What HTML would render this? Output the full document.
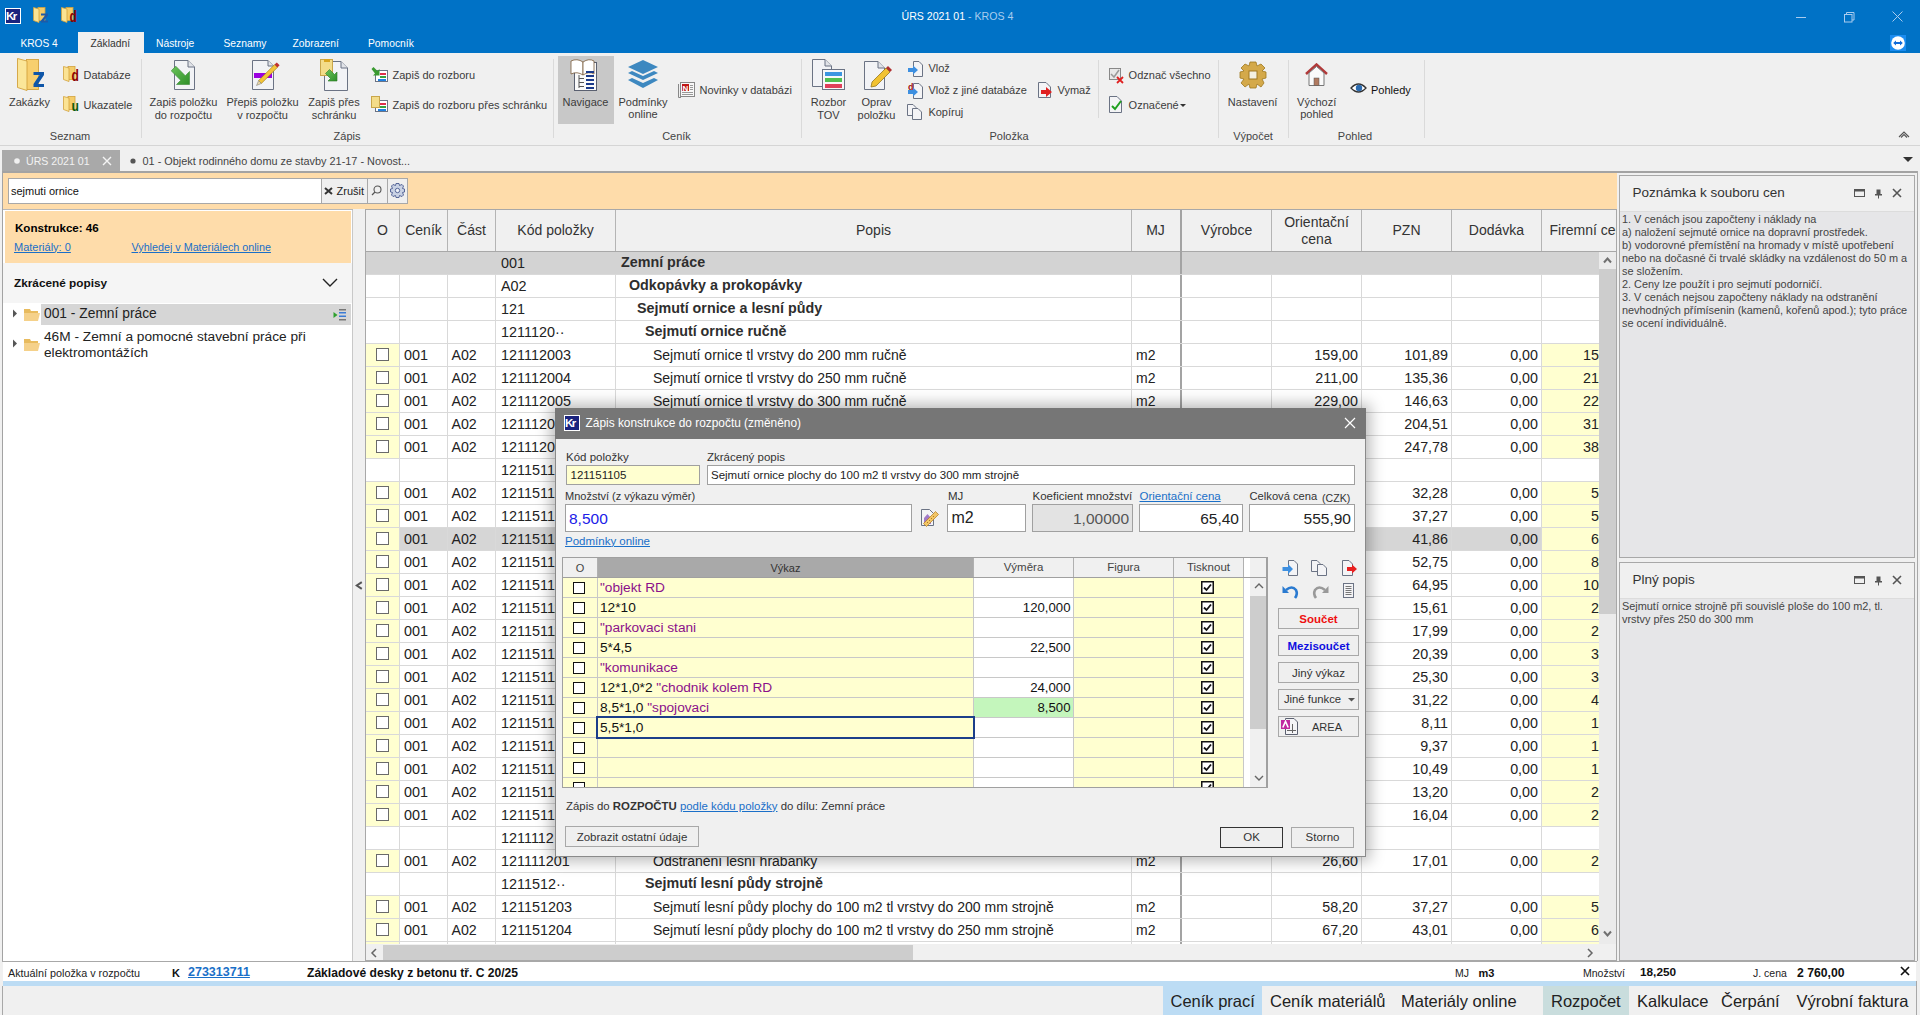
<!DOCTYPE html><html><head><meta charset="utf-8"><style>
html,body{margin:0;padding:0;}body{width:1920px;height:1015px;overflow:hidden;position:relative;background:#f0f0f0;font-family:"Liberation Sans",sans-serif;}
.t{position:absolute;white-space:nowrap;}.r{position:absolute;}
</style></head><body>
<div class="r" style="left:0px;top:0px;width:1920px;height:53px;background:#0072c6"></div>
<div class="r" style="left:5px;top:8px;width:16px;height:16px;background:#fff"></div>
<div class="r" style="left:6px;top:9px;width:14px;height:14px;background:#1a237e"></div>
<div class="t" style="left:6.00px;top:11.27px;font-size:11.5px;line-height:11.5px;color:#fff;font-weight:bold;letter-spacing:-1.5px">Kr</div>
<svg class="r" style="left:33px;top:7px;" width="18" height="17" viewBox="0 0 18 17"><rect x="5" y="0.5" width="7" height="13" fill="#f5cd6a" stroke="#d3a23c" stroke-width="0.8"/><path d="M0.5 0.5 L6 2 V15.5 L0.5 13.5 Z" fill="#fbe393" stroke="#d3a23c" stroke-width="0.8"/><path d="M8 6.5 H15 V8.5 L11 13.5 H15 V15.5 H8 V13.5 L12 8.5 H8 Z" fill="#1d5aa8"/></svg>
<svg class="r" style="left:61px;top:7px;" width="18" height="17" viewBox="0 0 18 17"><rect x="5" y="0.5" width="7" height="13" fill="#f5cd6a" stroke="#d3a23c" stroke-width="0.8"/><path d="M0.5 0.5 L6 2 V15.5 L0.5 13.5 Z" fill="#fbe393" stroke="#d3a23c" stroke-width="0.8"/><text x="8.6" y="15.3" font-family="Liberation Sans" font-weight="bold" font-size="16.5" fill="#8b0000" textLength="7.4" lengthAdjust="spacingAndGlyphs">d</text></svg>
<div class="t" style="left:901.50px;top:11.03px;font-size:10.6px;line-height:10.6px;color:#ffffff;font-weight:normal;">ÚRS 2021 01 <span style="color:#a9cdee">- KROS 4</span></div>
<div class="r" style="left:1796px;top:17px;width:10px;height:1px;background:#a9cbee"></div>
<svg class="r" style="left:1844px;top:12px;" width="11" height="11" viewBox="0 0 11 11"><rect x="0.5" y="2.5" width="7.5" height="7.5" fill="none" stroke="#a9cbee"/><path d="M2.5 2.5 V0.5 H10 V8 H8" fill="none" stroke="#a9cbee"/></svg>
<svg class="r" style="left:1892px;top:11px;" width="11" height="11" viewBox="0 0 11 11"><path d="M0.5 0.5 L10.5 10.5 M10.5 0.5 L0.5 10.5" stroke="#a9cbee" stroke-width="1"/></svg>
<div class="r" style="left:78px;top:32px;width:66px;height:21px;background:#f0f0f0"></div>
<div class="t" style="left:20.40px;top:39.17px;font-size:10.2px;line-height:10.2px;color:#ffffff;font-weight:normal;">KROS 4</div>
<div class="t" style="left:90.50px;top:39.28px;font-size:10.3px;line-height:10.3px;color:#333333;font-weight:normal;">Základní</div>
<div class="t" style="left:156.00px;top:39.28px;font-size:10.3px;line-height:10.3px;color:#ffffff;font-weight:normal;">Nástroje</div>
<div class="t" style="left:223.50px;top:39.28px;font-size:10.3px;line-height:10.3px;color:#ffffff;font-weight:normal;">Seznamy</div>
<div class="t" style="left:292.50px;top:39.28px;font-size:10.3px;line-height:10.3px;color:#ffffff;font-weight:normal;">Zobrazení</div>
<div class="t" style="left:368.00px;top:39.28px;font-size:10.3px;line-height:10.3px;color:#ffffff;font-weight:normal;">Pomocník</div>
<div class="r" style="left:1890px;top:35px;width:16px;height:16px;background:#1a8cf0"></div>
<svg class="r" style="left:1891px;top:36px;" width="14" height="14" viewBox="0 0 14 14"><circle cx="7" cy="7" r="6.8" fill="#fff"/><path d="M2.2 7 L5 4.6 V6 H9 V4.6 L11.8 7 L9 9.4 V8 H5 V9.4 Z" fill="#0e6ad8"/></svg>
<div class="r" style="left:0px;top:145px;width:1920px;height:1px;background:#d5d5d5"></div>
<div class="r" style="left:141px;top:59px;width:1px;height:79px;background:#dadada"></div>
<div class="r" style="left:553px;top:59px;width:1px;height:79px;background:#dadada"></div>
<div class="r" style="left:801px;top:59px;width:1px;height:79px;background:#dadada"></div>
<div class="r" style="left:1098px;top:60px;width:1px;height:58px;background:#dadada"></div>
<div class="r" style="left:1218px;top:60px;width:1px;height:78px;background:#dadada"></div>
<div class="r" style="left:1288px;top:60px;width:1px;height:78px;background:#dadada"></div>
<div class="r" style="left:1424px;top:60px;width:1px;height:78px;background:#dadada"></div>
<div class="t" style="left:-530.00px;width:1200px;text-align:center;top:130.99px;font-size:11px;line-height:11px;color:#444;font-weight:normal;">Seznam</div>
<div class="t" style="left:-253.00px;width:1200px;text-align:center;top:130.99px;font-size:11px;line-height:11px;color:#444;font-weight:normal;">Zápis</div>
<div class="t" style="left:76.50px;width:1200px;text-align:center;top:130.99px;font-size:11px;line-height:11px;color:#444;font-weight:normal;">Ceník</div>
<div class="t" style="left:409.00px;width:1200px;text-align:center;top:130.99px;font-size:11px;line-height:11px;color:#444;font-weight:normal;">Položka</div>
<div class="t" style="left:653.00px;width:1200px;text-align:center;top:130.99px;font-size:11px;line-height:11px;color:#444;font-weight:normal;">Výpočet</div>
<div class="t" style="left:755.00px;width:1200px;text-align:center;top:130.99px;font-size:11px;line-height:11px;color:#444;font-weight:normal;">Pohled</div>
<svg class="r" style="left:17px;top:58px;" width="30" height="34" viewBox="0 0 30 34"><rect x="9.5" y="1.5" width="12" height="30" fill="#f7cf6e" stroke="#d3a23c" stroke-width="0.9"/><path d="M0.5 0.5 L10 3 V32.5 L0.5 29.5 Z" fill="#fbe699" stroke="#d3a23c" stroke-width="0.9"/><path d="M16.5 14 H27 V17 L21 26 H27 V29 H16.5 V26 L22.5 17 H16.5 Z" fill="#0f56a8"/></svg>
<div class="t" style="left:-570.50px;width:1200px;text-align:center;top:97.49px;font-size:11px;line-height:11px;color:#3c3c3c;font-weight:normal;">Zakázky</div>
<svg class="r" style="left:63px;top:66px;" width="18" height="17" viewBox="0 0 18 17"><rect x="5" y="0.5" width="7" height="13" fill="#f5cd6a" stroke="#d3a23c" stroke-width="0.8"/><path d="M0.5 0.5 L6 2 V15.5 L0.5 13.5 Z" fill="#fbe393" stroke="#d3a23c" stroke-width="0.8"/><text x="8.6" y="15.3" font-family="Liberation Sans" font-weight="bold" font-size="16.5" fill="#8b0000" textLength="7.4" lengthAdjust="spacingAndGlyphs">d</text></svg>
<div class="t" style="left:83.50px;top:70.49px;font-size:11px;line-height:11px;color:#3c3c3c;font-weight:normal;">Databáze</div>
<svg class="r" style="left:63px;top:96px;" width="18" height="17" viewBox="0 0 18 17"><rect x="5" y="0.5" width="7" height="13" fill="#f5cd6a" stroke="#d3a23c" stroke-width="0.8"/><path d="M0.5 0.5 L6 2 V15.5 L0.5 13.5 Z" fill="#fbe393" stroke="#d3a23c" stroke-width="0.8"/><text x="8.6" y="15.3" font-family="Liberation Sans" font-weight="bold" font-size="15" fill="#0a5a0a" textLength="7.4" lengthAdjust="spacingAndGlyphs">u</text></svg>
<div class="t" style="left:83.50px;top:100.49px;font-size:11px;line-height:11px;color:#3c3c3c;font-weight:normal;">Ukazatele</div>
<svg class="r" style="left:171px;top:60px;" width="26" height="31" viewBox="0 0 26 31"><path d="M3.5 0.5 H17 L23.5 7 V29.5 H3.5 Z" fill="#f2f3f6" stroke="#6b7384"/><path d="M17 0.5 V7 H23.5" fill="#e1e3e8" stroke="#6b7384"/><defs><linearGradient id="ga" x1="0" y1="0" x2="1" y2="1"><stop offset="0" stop-color="#6cc45a"/><stop offset="1" stop-color="#2f8f2a"/></linearGradient></defs><path d="M4.8 6.2 L14.3 15.7 L18.5 11.5 L18.5 24.5 L5.5 24.5 L9.7 20.3 L0.2 10.8 Z" fill="url(#ga)" stroke="#3a8a35" stroke-width="0.6"/></svg>
<div class="t" style="left:-416.50px;width:1200px;text-align:center;top:97.49px;font-size:11px;line-height:11px;color:#3c3c3c;font-weight:normal;">Zapiš položku</div>
<div class="t" style="left:-416.50px;width:1200px;text-align:center;top:109.99px;font-size:11px;line-height:11px;color:#3c3c3c;font-weight:normal;">do rozpočtu</div>
<svg class="r" style="left:252px;top:60px;" width="30" height="31" viewBox="0 0 30 31"><path d="M0.5 0.5 H16 L21.5 6 V29.5 H0.5 Z" fill="#f2f3f6" stroke="#6b7384"/><path d="M16 0.5 V6 H21.5" fill="#e1e3e8" stroke="#6b7384"/><rect x="2" y="13" width="18" height="5" fill="#9b00e0"/><path d="M9.4 23.4 L25.4 7.4 L22.6 4.6 L6.6 20.6 Z" fill="#f3c53a" stroke="#9a7410" stroke-width="0.6"/><path d="M6.6 20.6 L9.4 23.4 L4.5 25.5 Z" fill="#e9d7a8" stroke="#777" stroke-width="0.5"/><path d="M25.4 7.4 L27.6 5.2 L24.8 2.4 L22.6 4.6 Z" fill="#c03030"/></svg>
<div class="t" style="left:-337.50px;width:1200px;text-align:center;top:97.49px;font-size:11px;line-height:11px;color:#3c3c3c;font-weight:normal;">Přepiš položku</div>
<div class="t" style="left:-337.50px;width:1200px;text-align:center;top:109.99px;font-size:11px;line-height:11px;color:#3c3c3c;font-weight:normal;">v rozpočtu</div>
<svg class="r" style="left:320px;top:59px;" width="28" height="32" viewBox="0 0 28 32"><path d="M4.5 2.5 H21 L27.5 9 V31.5 H4.5 Z" fill="#f2f3f6" stroke="#6b7384"/><path d="M21 2.5 V9 H27.5" fill="#e1e3e8" stroke="#6b7384"/><rect x="0.5" y="0.5" width="12" height="16" fill="#f3dc8a" stroke="#c9a64a"/><rect x="4" y="0" width="6" height="3" fill="#d9a520"/><path d="M7 13 L9.5 10.5 L14.5 15.5 L17 13 L17 22 L8 22 L10.5 19.5 L5.5 14.5 Z" fill="url(#ga)" stroke="#2a7a25" stroke-width="0.6"/></svg>
<div class="t" style="left:-266.00px;width:1200px;text-align:center;top:97.49px;font-size:11px;line-height:11px;color:#3c3c3c;font-weight:normal;">Zapiš přes</div>
<div class="t" style="left:-266.00px;width:1200px;text-align:center;top:109.99px;font-size:11px;line-height:11px;color:#3c3c3c;font-weight:normal;">schránku</div>
<svg class="r" style="left:371px;top:66px;" width="18" height="17" viewBox="0 0 18 17"><rect x="4.5" y="4.5" width="12" height="11" fill="#fff" stroke="#6b7384"/><rect x="9" y="7" width="6" height="2" fill="#e0304a"/><rect x="9" y="10" width="6" height="2" fill="#3aa040"/><rect x="7" y="13" width="8" height="2" fill="#2080e0"/><path d="M0.5 3 L2.5 1 L6.5 5 L8.5 3 L8.5 9.5 L2 9.5 L4 7.5 Z" fill="#3a9a30"/></svg>
<div class="t" style="left:392.50px;top:70.19px;font-size:11px;line-height:11px;color:#3c3c3c;font-weight:normal;">Zapiš do rozboru</div>
<svg class="r" style="left:371px;top:96px;" width="18" height="17" viewBox="0 0 18 17"><rect x="4.5" y="4.5" width="12" height="11" fill="#fff" stroke="#6b7384"/><rect x="9" y="7" width="6" height="2" fill="#e0304a"/><rect x="9" y="10" width="6" height="2" fill="#3aa040"/><rect x="7" y="13" width="8" height="2" fill="#2080e0"/><rect x="0.5" y="0.5" width="8" height="11" fill="#f3dc8a" stroke="#c9a64a"/></svg>
<div class="t" style="left:392.50px;top:100.09px;font-size:11px;line-height:11px;color:#3c3c3c;font-weight:normal;">Zapiš do rozboru přes schránku</div>
<div class="r" style="left:558px;top:56px;width:56px;height:68px;background:#c8c8c8"></div>
<svg class="r" style="left:570px;top:59px;" width="28" height="33" viewBox="0 0 28 33"><rect x="4.5" y="3.5" width="22" height="28" fill="#fafafa" stroke="#5a6070"/><path d="M1 2 Q7 -1 13 3 L13 16 Q7 12 1 15 Z" fill="#fff" stroke="#7a5a3a" stroke-width="0.8"/><path d="M13 3 Q19 -1 24 2 L24 15 Q19 12 13 16 Z" fill="#fff" stroke="#7a5a3a" stroke-width="0.8"/><g fill="#1a3a8a"><rect x="16" y="12" width="8" height="2"/><rect x="16" y="16" width="8" height="2"/><rect x="16" y="20" width="8" height="2"/><rect x="16" y="24" width="8" height="2"/><rect x="16" y="28" width="8" height="2"/></g><g stroke="#555" stroke-width="1" fill="none"><path d="M9 16 V29 M9 19.5 H14 M9 23.5 H14 M9 27.5 H14"/></g></svg>
<div class="t" style="left:-14.50px;width:1200px;text-align:center;top:96.99px;font-size:11px;line-height:11px;color:#3c3c3c;font-weight:normal;">Navigace</div>
<svg class="r" style="left:627px;top:59px;" width="32" height="31" viewBox="0 0 32 31"><g fill="#3d88c0"><path d="M16 1 L31 8 L16 15 L1 8 Z"/><path d="M1 14 L5 12 L16 17 L27 12 L31 14 L16 21 Z"/><path d="M1 21 L5 19 L16 24 L27 19 L31 21 L16 29 Z"/></g></svg>
<div class="t" style="left:43.00px;width:1200px;text-align:center;top:96.99px;font-size:11px;line-height:11px;color:#3c3c3c;font-weight:normal;">Podmínky</div>
<div class="t" style="left:43.00px;width:1200px;text-align:center;top:109.49px;font-size:11px;line-height:11px;color:#3c3c3c;font-weight:normal;">online</div>
<svg class="r" style="left:678px;top:81px;" width="18" height="17" viewBox="0 0 18 17"><rect x="2.5" y="1.5" width="14" height="14" fill="#f8f8f8" stroke="#888"/><rect x="4" y="3" width="7" height="7" fill="#c01818"/><text x="4.5" y="9.5" font-size="8" font-weight="bold" fill="#fff" font-family="Liberation Sans">N</text><g fill="#999"><rect x="12" y="4" width="3" height="1"/><rect x="12" y="6" width="3" height="1"/><rect x="12" y="8" width="3" height="1"/><rect x="4" y="11" width="11" height="1"/><rect x="4" y="13" width="11" height="1"/></g><path d="M0.5 3 V16.5 H3" fill="none" stroke="#888"/></svg>
<div class="t" style="left:699.50px;top:85.09px;font-size:11px;line-height:11px;color:#3c3c3c;font-weight:normal;">Novinky v databázi</div>
<svg class="r" style="left:811px;top:58px;" width="36" height="34" viewBox="0 0 36 34"><path d="M1.5 1.5 H14 L20.5 8 V28.5 H1.5 Z" fill="#f2f3f6" stroke="#6b7384"/><path d="M14 1.5 V8 H20.5" fill="#e1e3e8" stroke="#6b7384"/><rect x="11.5" y="11.5" width="22" height="20" fill="#f8f8f8" stroke="#6b7384"/><rect x="14" y="14" width="17" height="4" fill="#3c96e0"/><rect x="14" y="20" width="17" height="4" fill="#50c050"/><rect x="14" y="26" width="17" height="4" fill="#e0405a"/></svg>
<div class="t" style="left:228.50px;width:1200px;text-align:center;top:97.49px;font-size:11px;line-height:11px;color:#3c3c3c;font-weight:normal;">Rozbor</div>
<div class="t" style="left:228.50px;width:1200px;text-align:center;top:110.24px;font-size:11px;line-height:11px;color:#3c3c3c;font-weight:normal;">TOV</div>
<svg class="r" style="left:863px;top:60px;" width="30" height="32" viewBox="0 0 30 32"><path d="M1.5 1.5 H15 L21.5 8 V29.5 H1.5 Z" fill="#f2f3f6" stroke="#6b7384"/><path d="M15 1.5 V8 H21.5" fill="#e1e3e8" stroke="#6b7384"/><path d="M9 22 L23 8 L27 12 L13 26 L8 27 Z" fill="#f1c232" stroke="#8a6a10" stroke-width="0.7"/><path d="M23 8 L25 6 L29 10 L27 12 Z" fill="#b03030"/></svg>
<div class="t" style="left:276.50px;width:1200px;text-align:center;top:97.49px;font-size:11px;line-height:11px;color:#3c3c3c;font-weight:normal;">Oprav</div>
<div class="t" style="left:276.50px;width:1200px;text-align:center;top:110.24px;font-size:11px;line-height:11px;color:#3c3c3c;font-weight:normal;">položku</div>
<svg class="r" style="left:908px;top:61px;" width="17" height="17" viewBox="0 0 17 17"><path d="M5.5 0.5 H11 L14.5 4 V15.5 H5.5 Z" fill="#f4f4f6" stroke="#6b7384"/><path d="M0 7 H5 V4.5 L10 9 L5 13.5 V11 H0 Z" fill="#3d8fe0"/></svg>
<div class="t" style="left:928.40px;top:63.49px;font-size:11px;line-height:11px;color:#3c3c3c;font-weight:normal;">Vlož</div>
<svg class="r" style="left:908px;top:83px;" width="17" height="17" viewBox="0 0 17 17"><path d="M5.5 0.5 H11 L14.5 4 V15.5 H5.5 Z" fill="#f4f4f6" stroke="#6b7384"/><path d="M0 7 H5 V4.5 L10 9 L5 13.5 V11 H0 Z" fill="#3d8fe0"/><text x="0" y="7" font-size="9" font-weight="bold" fill="#a01010" font-family="Liberation Sans">d</text></svg>
<div class="t" style="left:928.40px;top:85.24px;font-size:11px;line-height:11px;color:#3c3c3c;font-weight:normal;">Vlož z jiné databáze</div>
<svg class="r" style="left:907px;top:104px;" width="17" height="17" viewBox="0 0 17 17"><path d="M0.5 0.5 H6 L9 3.5 V11.5 H0.5 Z" fill="#f4f4f6" stroke="#6b7384"/><path d="M5.5 4.5 H11 L14.5 8 V15.5 H5.5 Z" fill="#f4f4f6" stroke="#6b7384"/></svg>
<div class="t" style="left:928.40px;top:107.09px;font-size:11px;line-height:11px;color:#3c3c3c;font-weight:normal;">Kopíruj</div>
<svg class="r" style="left:1038px;top:82px;" width="17" height="17" viewBox="0 0 17 17"><path d="M0.5 0.5 H8 L12.5 5 V15.5 H0.5 Z" fill="#f4f4f6" stroke="#6b7384"/><path d="M3 8 H8 V5 L14 10 L8 15 V12 H3 Z" fill="#e02020"/></svg>
<div class="t" style="left:1057.50px;top:85.24px;font-size:11px;line-height:11px;color:#3c3c3c;font-weight:normal;">Vymaž</div>
<svg class="r" style="left:1109px;top:67px;" width="18" height="18" viewBox="0 0 18 18"><rect x="0.5" y="1.5" width="11" height="11" fill="#e8e8e8" stroke="#888"/><path d="M2 7 L5 10 L10 3" stroke="#999" stroke-width="1.5" fill="none"/><path d="M8 10 L14 16 M14 10 L8 16" stroke="#e02020" stroke-width="1.8"/></svg>
<div class="t" style="left:1128.60px;top:69.79px;font-size:11px;line-height:11px;color:#3c3c3c;font-weight:normal;">Odznač všechno</div>
<svg class="r" style="left:1109px;top:96px;" width="18" height="18" viewBox="0 0 18 18"><path d="M0.5 0.5 H8 L12.5 5 V16.5 H0.5 Z" fill="#f4f4f6" stroke="#6b7384"/><path d="M3 10 L6 13 L12 5" stroke="#20a020" stroke-width="2" fill="none"/></svg>
<div class="t" style="left:1128.60px;top:99.89px;font-size:11px;line-height:11px;color:#3c3c3c;font-weight:normal;">Označené</div>
<svg class="r" style="left:1180px;top:104px;" width="6" height="4" viewBox="0 0 6 4"><path d="M0 0 H6 L3 3 Z" fill="#333"/></svg>
<svg class="r" style="left:1239px;top:61px;" width="28" height="28" viewBox="0 0 28 28"><g transform="translate(14,14)"><path d="M-3 -13 H3 L4 -9 L8 -11 L12 -7 L9 -4 L13 -3 V3 L9 4 L11 8 L8 12 L4 9 L3 13 H-3 L-4 9 L-8 12 L-12 8 L-9 4 L-13 3 V-3 L-9 -4 L-12 -7 L-8 -11 L-4 -9 Z" fill="#d4a94a" stroke="#a07820" stroke-width="0.8"/><rect x="-4" y="-4" width="8" height="8" fill="#f4f0e0" stroke="#a07820"/></g></svg>
<div class="t" style="left:652.60px;width:1200px;text-align:center;top:97.29px;font-size:11px;line-height:11px;color:#3c3c3c;font-weight:normal;">Nastavení</div>
<svg class="r" style="left:1304px;top:63px;" width="25" height="25" viewBox="0 0 25 25"><path d="M2 11 L12.5 1.5 L23 11" fill="none" stroke="#b03a3a" stroke-width="2.5"/><path d="M5 10 V22.5 H20 V10 L12.5 3.5 Z" fill="#fafafa" stroke="#777"/><rect x="10" y="15" width="5" height="7.5" fill="#b07a60" stroke="#555" stroke-width="0.5"/></svg>
<div class="t" style="left:716.70px;width:1200px;text-align:center;top:96.99px;font-size:11px;line-height:11px;color:#3c3c3c;font-weight:normal;">Výchozí</div>
<div class="t" style="left:716.70px;width:1200px;text-align:center;top:109.49px;font-size:11px;line-height:11px;color:#3c3c3c;font-weight:normal;">pohled</div>
<svg class="r" style="left:1350px;top:82px;" width="17" height="12" viewBox="0 0 17 12"><path d="M1 6 Q8.5 -2 16 6 Q8.5 14 1 6 Z" fill="#fff" stroke="#333" stroke-width="1.3"/><circle cx="9" cy="6" r="3.2" fill="#2a6ab0"/></svg>
<div class="t" style="left:1371.00px;top:84.89px;font-size:11px;line-height:11px;color:#111;font-weight:normal;">Pohledy</div>
<svg class="r" style="left:1898px;top:129px;" width="12" height="9" viewBox="0 0 12 9"><path d="M1 8 L6 3 L11 8 M3 8.5 L6 5.5 L9 8.5" fill="none" stroke="#555" stroke-width="1.1"/></svg>
<div class="r" style="left:2px;top:150px;width:118px;height:22px;background:#a9a9a9"></div>
<svg class="r" style="left:13px;top:157px;" width="8" height="8" viewBox="0 0 8 8"><circle cx="4" cy="4" r="2.8" fill="#f0f0f0"/></svg>
<div class="t" style="left:26.00px;top:156.23px;font-size:10.6px;line-height:10.6px;color:#f2f2f2;font-weight:normal;">ÚRS 2021 01</div>
<svg class="r" style="left:102px;top:156px;" width="10" height="10" viewBox="0 0 10 10"><path d="M1 1 L9 9 M9 1 L1 9" stroke="#f4f4f4" stroke-width="1.4"/></svg>
<svg class="r" style="left:129px;top:157px;" width="8" height="8" viewBox="0 0 8 8"><circle cx="4" cy="4" r="2.6" fill="#555"/></svg>
<div class="t" style="left:142.50px;top:155.97px;font-size:10.9px;line-height:10.9px;color:#444;font-weight:normal;">01 - Objekt rodinného domu ze stavby 21-17 - Novost...</div>
<svg class="r" style="left:1903px;top:157px;" width="10" height="6" viewBox="0 0 10 6"><path d="M0 0 H10 L5 5 Z" fill="#333"/></svg>
<div class="r" style="left:2px;top:171px;width:1915px;height:2px;background:#a3a3a3"></div>
<div class="r" style="left:2px;top:171px;width:1px;height:790px;background:#a3a3a3"></div>
<div class="r" style="left:3px;top:173px;width:1614px;height:36px;background:#fedcaa"></div>
<div class="r" style="left:8px;top:178px;width:314px;height:26px;background:#fff;border:1px solid #a8a8a8;box-sizing:border-box"></div>
<div class="t" style="left:11.00px;top:185.69px;font-size:11px;line-height:11px;color:#111;font-weight:normal;">sejmuti ornice</div>
<div class="r" style="left:322px;top:178px;width:46px;height:26px;background:#efefef;border:1px solid #a8a8a8;border-left:none;box-sizing:border-box"></div>
<div class="r" style="left:368px;top:178px;width:20px;height:26px;background:#efefef;border:1px solid #a8a8a8;border-left:none;box-sizing:border-box"></div>
<div class="r" style="left:388px;top:178px;width:20px;height:26px;background:#efefef;border:1px solid #a8a8a8;border-left:none;box-sizing:border-box"></div>
<svg class="r" style="left:324px;top:187px;" width="9" height="8" viewBox="0 0 9 8"><path d="M1 1 L8 7 M8 1 L1 7" stroke="#333" stroke-width="2"/></svg>
<div class="t" style="left:336.50px;top:185.69px;font-size:11px;line-height:11px;color:#222;font-weight:normal;">Zrušit</div>
<svg class="r" style="left:371px;top:185px;" width="11" height="11" viewBox="0 0 11 11"><circle cx="6.5" cy="4.5" r="3.5" fill="none" stroke="#555" stroke-width="1.1"/><path d="M4 7 L1 10" stroke="#555" stroke-width="1.3"/></svg>
<svg class="r" style="left:390px;top:183px;" width="15" height="15" viewBox="0 0 15 15"><g transform="translate(7.5,7.5)"><path d="M-1.5 -7 H1.5 L2 -5 L4.5 -6 L6 -4.5 L5 -2 L7 -1.5 V1.5 L5 2 L6 4.5 L4.5 6 L2 5 L1.5 7 H-1.5 L-2 5 L-4.5 6 L-6 4.5 L-5 2 L-7 1.5 V-1.5 L-5 -2 L-6 -4.5 L-4.5 -6 L-2 -5 Z" fill="#c9d2e4" stroke="#4a5a90" stroke-width="0.9"/><circle r="2.2" fill="#eef2f8" stroke="#4a5a90" stroke-width="0.9"/></g></svg>
<div class="r" style="left:3px;top:209px;width:350px;height:752px;background:#fff"></div>
<div class="r" style="left:352px;top:209px;width:1px;height:752px;background:#c8c8c8"></div>
<div class="r" style="left:3px;top:209px;width:350px;height:1px;background:#b8b8b8"></div>
<div class="r" style="left:5px;top:211px;width:346px;height:52px;background:#fedcaa"></div>
<div class="t" style="left:15.00px;top:222.18px;font-size:11.6px;line-height:11.6px;color:#000;font-weight:bold;">Konstrukce: 46</div>
<div class="t" style="left:14.00px;top:241.69px;font-size:11px;line-height:11px;color:#1a6fc8;font-weight:normal;text-decoration:underline">Materiály: 0</div>
<div class="t" style="left:131.50px;top:241.90px;font-size:10.75px;line-height:10.75px;color:#1a6fc8;font-weight:normal;text-decoration:underline">Vyhledej v Materiálech online</div>
<div class="r" style="left:3px;top:263px;width:349px;height:40px;background:#f5f5f5"></div>
<div class="t" style="left:14.00px;top:278.01px;font-size:11.8px;line-height:11.8px;color:#111;font-weight:bold;">Zkrácené popisy</div>
<svg class="r" style="left:322px;top:278px;" width="16" height="10" viewBox="0 0 16 10"><path d="M1 1 L8 8 L15 1" fill="none" stroke="#222" stroke-width="1.4"/></svg>
<div class="r" style="left:41px;top:304px;width:310px;height:21px;background:#d6d6d6"></div>
<svg class="r" style="left:12px;top:309px;" width="6" height="9" viewBox="0 0 6 9"><path d="M1 0.5 L5 4.5 L1 8.5 Z" fill="#555"/></svg>
<svg class="r" style="left:23px;top:307px;" width="18" height="15" viewBox="0 0 18 15"><path d="M1 2 H7 L8 4 H15 V13 H1 Z" fill="#e8bb5e"/><path d="M1 6 H17 L15 14 H1 Z" fill="#f5d18a"/></svg>
<div class="t" style="left:44.00px;top:307.32px;font-size:13.8px;line-height:13.8px;color:#222;font-weight:normal;">001 - Zemní práce</div>
<svg class="r" style="left:333px;top:308px;" width="14" height="13" viewBox="0 0 14 13"><path d="M0.5 4 L4.5 7 L0.5 10 Z" fill="#2ea02e"/><g fill="#777"><rect x="6" y="1" width="7" height="1.5"/><rect x="6" y="11" width="7" height="1.5"/></g><g fill="#3a7bd5"><rect x="6" y="4" width="7" height="1.5"/><rect x="6" y="7.5" width="7" height="1.5"/></g></svg>
<svg class="r" style="left:12px;top:339px;" width="6" height="9" viewBox="0 0 6 9"><path d="M1 0.5 L5 4.5 L1 8.5 Z" fill="#555"/></svg>
<svg class="r" style="left:23px;top:337px;" width="18" height="15" viewBox="0 0 18 15"><path d="M1 2 H7 L8 4 H15 V13 H1 Z" fill="#e8bb5e"/><path d="M1 6 H17 L15 14 H1 Z" fill="#f5d18a"/></svg>
<div class="t" style="left:44.00px;top:329.60px;font-size:13.7px;line-height:13.7px;color:#222;font-weight:normal;">46M - Zemní a pomocné stavební práce při</div>
<div class="t" style="left:44.00px;top:345.90px;font-size:13.7px;line-height:13.7px;color:#222;font-weight:normal;">elektromontážích</div>
<div class="r" style="left:353px;top:209px;width:12px;height:752px;background:#f0f0f0"></div>
<svg class="r" style="left:355px;top:581px;" width="8" height="9" viewBox="0 0 8 9"><path d="M6.8 1.2 L1.8 4.5 L6.8 7.8" fill="none" stroke="#555" stroke-width="2"/></svg>
<div class="r" style="left:365px;top:209px;width:1252px;height:752px;background:#fff"></div>
<div class="r" style="left:365px;top:209px;width:1252px;height:43px;background:#f0f0f0"></div>
<div class="r" style="left:365px;top:209px;width:1252px;height:1px;background:#a8a8a8"></div>
<div class="r" style="left:365px;top:209px;width:1px;height:752px;background:#a8a8a8"></div>
<div class="r" style="left:1616px;top:209px;width:1px;height:752px;background:#a8a8a8"></div>
<div class="r" style="left:365px;top:251px;width:1252px;height:1px;background:#a8a8a8"></div>
<div class="r" style="left:399px;top:210px;width:1px;height:41px;background:#b4b4b4"></div>
<div class="r" style="left:447px;top:210px;width:1px;height:41px;background:#b4b4b4"></div>
<div class="r" style="left:495px;top:210px;width:1px;height:41px;background:#b4b4b4"></div>
<div class="r" style="left:615px;top:210px;width:1px;height:41px;background:#b4b4b4"></div>
<div class="r" style="left:1131px;top:210px;width:1px;height:41px;background:#b4b4b4"></div>
<div class="r" style="left:1271px;top:210px;width:1px;height:41px;background:#b4b4b4"></div>
<div class="r" style="left:1361px;top:210px;width:1px;height:41px;background:#b4b4b4"></div>
<div class="r" style="left:1451px;top:210px;width:1px;height:41px;background:#b4b4b4"></div>
<div class="r" style="left:1541px;top:210px;width:1px;height:41px;background:#b4b4b4"></div>
<div class="r" style="left:1180px;top:210px;width:2px;height:751px;background:#a3a3a3"></div>
<div class="t" style="left:-217.50px;width:1200px;text-align:center;top:222.55px;font-size:14px;line-height:14px;color:#333;font-weight:normal;">O</div>
<div class="t" style="left:-176.50px;width:1200px;text-align:center;top:222.55px;font-size:14px;line-height:14px;color:#333;font-weight:normal;">Ceník</div>
<div class="t" style="left:-128.50px;width:1200px;text-align:center;top:222.55px;font-size:14px;line-height:14px;color:#333;font-weight:normal;">Část</div>
<div class="t" style="left:-44.50px;width:1200px;text-align:center;top:222.55px;font-size:14px;line-height:14px;color:#333;font-weight:normal;">Kód položky</div>
<div class="t" style="left:273.50px;width:1200px;text-align:center;top:222.55px;font-size:14px;line-height:14px;color:#333;font-weight:normal;">Popis</div>
<div class="t" style="left:555.50px;width:1200px;text-align:center;top:222.55px;font-size:14px;line-height:14px;color:#333;font-weight:normal;">MJ</div>
<div class="t" style="left:626.50px;width:1200px;text-align:center;top:222.55px;font-size:14px;line-height:14px;color:#333;font-weight:normal;">Výrobce</div>
<div class="t" style="left:806.50px;width:1200px;text-align:center;top:222.55px;font-size:14px;line-height:14px;color:#333;font-weight:normal;">PZN</div>
<div class="t" style="left:896.50px;width:1200px;text-align:center;top:222.55px;font-size:14px;line-height:14px;color:#333;font-weight:normal;">Dodávka</div>
<div class="t" style="left:716.50px;width:1200px;text-align:center;top:214.55px;font-size:14px;line-height:14px;color:#333;font-weight:normal;">Orientační</div>
<div class="t" style="left:716.50px;width:1200px;text-align:center;top:231.75px;font-size:14px;line-height:14px;color:#333;font-weight:normal;">cena</div>
<div class="r" style="left:1542px;top:210px;width:74px;height:40px;overflow:hidden">
<div class="t" style="left:7.50px;top:12.55px;font-size:14px;line-height:14px;color:#333;font-weight:normal;">Firemní cena</div>
</div>
<div class="r" style="left:366px;top:252px;width:1233px;height:22px;background:#d3d3d3"></div>
<div class="r" style="left:1180px;top:252px;width:2px;height:23px;background:#a3a3a3"></div>
<div class="r" style="left:366px;top:274px;width:1233px;height:1px;background:#d9d9d9"></div>
<div class="t" style="left:501.00px;top:255.51px;font-size:14.4px;line-height:14.4px;color:#222;font-weight:normal;">001</div>
<div class="t" style="left:621.00px;top:254.60px;font-size:14.3px;line-height:14.3px;color:#2e2e2e;font-weight:bold;">Zemní práce</div>
<div class="r" style="left:399px;top:275px;width:1px;height:23px;background:#d9d9d9"></div>
<div class="r" style="left:447px;top:275px;width:1px;height:23px;background:#d9d9d9"></div>
<div class="r" style="left:495px;top:275px;width:1px;height:23px;background:#d9d9d9"></div>
<div class="r" style="left:615px;top:275px;width:1px;height:23px;background:#d9d9d9"></div>
<div class="r" style="left:1131px;top:275px;width:1px;height:23px;background:#d9d9d9"></div>
<div class="r" style="left:1271px;top:275px;width:1px;height:23px;background:#d9d9d9"></div>
<div class="r" style="left:1361px;top:275px;width:1px;height:23px;background:#d9d9d9"></div>
<div class="r" style="left:1451px;top:275px;width:1px;height:23px;background:#d9d9d9"></div>
<div class="r" style="left:1541px;top:275px;width:1px;height:23px;background:#d9d9d9"></div>
<div class="r" style="left:366px;top:297px;width:1233px;height:1px;background:#d9d9d9"></div>
<div class="t" style="left:501.00px;top:278.51px;font-size:14.4px;line-height:14.4px;color:#222;font-weight:normal;">A02</div>
<div class="t" style="left:629.00px;top:277.60px;font-size:14.3px;line-height:14.3px;color:#2e2e2e;font-weight:bold;">Odkopávky a prokopávky</div>
<div class="r" style="left:399px;top:298px;width:1px;height:23px;background:#d9d9d9"></div>
<div class="r" style="left:447px;top:298px;width:1px;height:23px;background:#d9d9d9"></div>
<div class="r" style="left:495px;top:298px;width:1px;height:23px;background:#d9d9d9"></div>
<div class="r" style="left:615px;top:298px;width:1px;height:23px;background:#d9d9d9"></div>
<div class="r" style="left:1131px;top:298px;width:1px;height:23px;background:#d9d9d9"></div>
<div class="r" style="left:1271px;top:298px;width:1px;height:23px;background:#d9d9d9"></div>
<div class="r" style="left:1361px;top:298px;width:1px;height:23px;background:#d9d9d9"></div>
<div class="r" style="left:1451px;top:298px;width:1px;height:23px;background:#d9d9d9"></div>
<div class="r" style="left:1541px;top:298px;width:1px;height:23px;background:#d9d9d9"></div>
<div class="r" style="left:366px;top:320px;width:1233px;height:1px;background:#d9d9d9"></div>
<div class="t" style="left:501.00px;top:301.51px;font-size:14.4px;line-height:14.4px;color:#222;font-weight:normal;">121</div>
<div class="t" style="left:637.00px;top:300.60px;font-size:14.3px;line-height:14.3px;color:#2e2e2e;font-weight:bold;">Sejmutí ornice a lesní půdy</div>
<div class="r" style="left:399px;top:321px;width:1px;height:23px;background:#d9d9d9"></div>
<div class="r" style="left:447px;top:321px;width:1px;height:23px;background:#d9d9d9"></div>
<div class="r" style="left:495px;top:321px;width:1px;height:23px;background:#d9d9d9"></div>
<div class="r" style="left:615px;top:321px;width:1px;height:23px;background:#d9d9d9"></div>
<div class="r" style="left:1131px;top:321px;width:1px;height:23px;background:#d9d9d9"></div>
<div class="r" style="left:1271px;top:321px;width:1px;height:23px;background:#d9d9d9"></div>
<div class="r" style="left:1361px;top:321px;width:1px;height:23px;background:#d9d9d9"></div>
<div class="r" style="left:1451px;top:321px;width:1px;height:23px;background:#d9d9d9"></div>
<div class="r" style="left:1541px;top:321px;width:1px;height:23px;background:#d9d9d9"></div>
<div class="r" style="left:366px;top:343px;width:1233px;height:1px;background:#d9d9d9"></div>
<div class="t" style="left:501.00px;top:324.51px;font-size:14.4px;line-height:14.4px;color:#222;font-weight:normal;">1211120··</div>
<div class="t" style="left:645.00px;top:323.60px;font-size:14.3px;line-height:14.3px;color:#2e2e2e;font-weight:bold;">Sejmutí ornice ručně</div>
<div class="r" style="left:366px;top:344px;width:33px;height:23px;background:#ffffd0"></div>
<div class="r" style="left:1542px;top:344px;width:57px;height:23px;background:#ffffd0"></div>
<div class="r" style="left:399px;top:344px;width:1px;height:23px;background:#d9d9d9"></div>
<div class="r" style="left:447px;top:344px;width:1px;height:23px;background:#d9d9d9"></div>
<div class="r" style="left:495px;top:344px;width:1px;height:23px;background:#d9d9d9"></div>
<div class="r" style="left:615px;top:344px;width:1px;height:23px;background:#d9d9d9"></div>
<div class="r" style="left:1131px;top:344px;width:1px;height:23px;background:#d9d9d9"></div>
<div class="r" style="left:1271px;top:344px;width:1px;height:23px;background:#d9d9d9"></div>
<div class="r" style="left:1361px;top:344px;width:1px;height:23px;background:#d9d9d9"></div>
<div class="r" style="left:1451px;top:344px;width:1px;height:23px;background:#d9d9d9"></div>
<div class="r" style="left:1541px;top:344px;width:1px;height:23px;background:#d9d9d9"></div>
<div class="r" style="left:366px;top:366px;width:1233px;height:1px;background:#d9d9d9"></div>
<div class="r" style="left:376px;top:348px;width:13px;height:13px;background:#fff;border:1px solid #6a6a6a;box-sizing:border-box"></div>
<div class="t" style="left:404.00px;top:347.51px;font-size:14.4px;line-height:14.4px;color:#222;font-weight:normal;">001</div>
<div class="t" style="left:451.50px;top:347.68px;font-size:14.2px;line-height:14.2px;color:#222;font-weight:normal;">A02</div>
<div class="t" style="left:501.00px;top:347.51px;font-size:14.4px;line-height:14.4px;color:#222;font-weight:normal;">121112003</div>
<div class="t" style="left:653.00px;top:347.85px;font-size:14px;line-height:14px;color:#222;font-weight:normal;">Sejmutí ornice tl vrstvy do 200 mm ručně</div>
<div class="t" style="left:1136.00px;top:347.85px;font-size:14px;line-height:14px;color:#222;font-weight:normal;">m2</div>
<div class="t" style="left:158.00px;width:1200px;text-align:right;top:347.60px;font-size:14.3px;line-height:14.3px;color:#222;font-weight:normal;">159,00</div>
<div class="t" style="left:248.00px;width:1200px;text-align:right;top:347.60px;font-size:14.3px;line-height:14.3px;color:#222;font-weight:normal;">101,89</div>
<div class="t" style="left:338.00px;width:1200px;text-align:right;top:347.60px;font-size:14.3px;line-height:14.3px;color:#222;font-weight:normal;">0,00</div>
<div class="t" style="left:399.00px;width:1200px;text-align:right;top:347.60px;font-size:14.3px;line-height:14.3px;color:#222;font-weight:normal;">15</div>
<div class="r" style="left:366px;top:367px;width:33px;height:23px;background:#ffffd0"></div>
<div class="r" style="left:1542px;top:367px;width:57px;height:23px;background:#ffffd0"></div>
<div class="r" style="left:399px;top:367px;width:1px;height:23px;background:#d9d9d9"></div>
<div class="r" style="left:447px;top:367px;width:1px;height:23px;background:#d9d9d9"></div>
<div class="r" style="left:495px;top:367px;width:1px;height:23px;background:#d9d9d9"></div>
<div class="r" style="left:615px;top:367px;width:1px;height:23px;background:#d9d9d9"></div>
<div class="r" style="left:1131px;top:367px;width:1px;height:23px;background:#d9d9d9"></div>
<div class="r" style="left:1271px;top:367px;width:1px;height:23px;background:#d9d9d9"></div>
<div class="r" style="left:1361px;top:367px;width:1px;height:23px;background:#d9d9d9"></div>
<div class="r" style="left:1451px;top:367px;width:1px;height:23px;background:#d9d9d9"></div>
<div class="r" style="left:1541px;top:367px;width:1px;height:23px;background:#d9d9d9"></div>
<div class="r" style="left:366px;top:389px;width:1233px;height:1px;background:#d9d9d9"></div>
<div class="r" style="left:376px;top:371px;width:13px;height:13px;background:#fff;border:1px solid #6a6a6a;box-sizing:border-box"></div>
<div class="t" style="left:404.00px;top:370.51px;font-size:14.4px;line-height:14.4px;color:#222;font-weight:normal;">001</div>
<div class="t" style="left:451.50px;top:370.68px;font-size:14.2px;line-height:14.2px;color:#222;font-weight:normal;">A02</div>
<div class="t" style="left:501.00px;top:370.51px;font-size:14.4px;line-height:14.4px;color:#222;font-weight:normal;">121112004</div>
<div class="t" style="left:653.00px;top:370.85px;font-size:14px;line-height:14px;color:#222;font-weight:normal;">Sejmutí ornice tl vrstvy do 250 mm ručně</div>
<div class="t" style="left:1136.00px;top:370.85px;font-size:14px;line-height:14px;color:#222;font-weight:normal;">m2</div>
<div class="t" style="left:158.00px;width:1200px;text-align:right;top:370.60px;font-size:14.3px;line-height:14.3px;color:#222;font-weight:normal;">211,00</div>
<div class="t" style="left:248.00px;width:1200px;text-align:right;top:370.60px;font-size:14.3px;line-height:14.3px;color:#222;font-weight:normal;">135,36</div>
<div class="t" style="left:338.00px;width:1200px;text-align:right;top:370.60px;font-size:14.3px;line-height:14.3px;color:#222;font-weight:normal;">0,00</div>
<div class="t" style="left:399.00px;width:1200px;text-align:right;top:370.60px;font-size:14.3px;line-height:14.3px;color:#222;font-weight:normal;">21</div>
<div class="r" style="left:366px;top:390px;width:33px;height:23px;background:#ffffd0"></div>
<div class="r" style="left:1542px;top:390px;width:57px;height:23px;background:#ffffd0"></div>
<div class="r" style="left:399px;top:390px;width:1px;height:23px;background:#d9d9d9"></div>
<div class="r" style="left:447px;top:390px;width:1px;height:23px;background:#d9d9d9"></div>
<div class="r" style="left:495px;top:390px;width:1px;height:23px;background:#d9d9d9"></div>
<div class="r" style="left:615px;top:390px;width:1px;height:23px;background:#d9d9d9"></div>
<div class="r" style="left:1131px;top:390px;width:1px;height:23px;background:#d9d9d9"></div>
<div class="r" style="left:1271px;top:390px;width:1px;height:23px;background:#d9d9d9"></div>
<div class="r" style="left:1361px;top:390px;width:1px;height:23px;background:#d9d9d9"></div>
<div class="r" style="left:1451px;top:390px;width:1px;height:23px;background:#d9d9d9"></div>
<div class="r" style="left:1541px;top:390px;width:1px;height:23px;background:#d9d9d9"></div>
<div class="r" style="left:366px;top:412px;width:1233px;height:1px;background:#d9d9d9"></div>
<div class="r" style="left:376px;top:394px;width:13px;height:13px;background:#fff;border:1px solid #6a6a6a;box-sizing:border-box"></div>
<div class="t" style="left:404.00px;top:393.51px;font-size:14.4px;line-height:14.4px;color:#222;font-weight:normal;">001</div>
<div class="t" style="left:451.50px;top:393.68px;font-size:14.2px;line-height:14.2px;color:#222;font-weight:normal;">A02</div>
<div class="t" style="left:501.00px;top:393.51px;font-size:14.4px;line-height:14.4px;color:#222;font-weight:normal;">121112005</div>
<div class="t" style="left:653.00px;top:393.85px;font-size:14px;line-height:14px;color:#222;font-weight:normal;">Sejmutí ornice tl vrstvy do 300 mm ručně</div>
<div class="t" style="left:1136.00px;top:393.85px;font-size:14px;line-height:14px;color:#222;font-weight:normal;">m2</div>
<div class="t" style="left:158.00px;width:1200px;text-align:right;top:393.60px;font-size:14.3px;line-height:14.3px;color:#222;font-weight:normal;">229,00</div>
<div class="t" style="left:248.00px;width:1200px;text-align:right;top:393.60px;font-size:14.3px;line-height:14.3px;color:#222;font-weight:normal;">146,63</div>
<div class="t" style="left:338.00px;width:1200px;text-align:right;top:393.60px;font-size:14.3px;line-height:14.3px;color:#222;font-weight:normal;">0,00</div>
<div class="t" style="left:399.00px;width:1200px;text-align:right;top:393.60px;font-size:14.3px;line-height:14.3px;color:#222;font-weight:normal;">22</div>
<div class="r" style="left:366px;top:413px;width:33px;height:23px;background:#ffffd0"></div>
<div class="r" style="left:1542px;top:413px;width:57px;height:23px;background:#ffffd0"></div>
<div class="r" style="left:399px;top:413px;width:1px;height:23px;background:#d9d9d9"></div>
<div class="r" style="left:447px;top:413px;width:1px;height:23px;background:#d9d9d9"></div>
<div class="r" style="left:495px;top:413px;width:1px;height:23px;background:#d9d9d9"></div>
<div class="r" style="left:615px;top:413px;width:1px;height:23px;background:#d9d9d9"></div>
<div class="r" style="left:1131px;top:413px;width:1px;height:23px;background:#d9d9d9"></div>
<div class="r" style="left:1271px;top:413px;width:1px;height:23px;background:#d9d9d9"></div>
<div class="r" style="left:1361px;top:413px;width:1px;height:23px;background:#d9d9d9"></div>
<div class="r" style="left:1451px;top:413px;width:1px;height:23px;background:#d9d9d9"></div>
<div class="r" style="left:1541px;top:413px;width:1px;height:23px;background:#d9d9d9"></div>
<div class="r" style="left:366px;top:435px;width:1233px;height:1px;background:#d9d9d9"></div>
<div class="r" style="left:376px;top:417px;width:13px;height:13px;background:#fff;border:1px solid #6a6a6a;box-sizing:border-box"></div>
<div class="t" style="left:404.00px;top:416.51px;font-size:14.4px;line-height:14.4px;color:#222;font-weight:normal;">001</div>
<div class="t" style="left:451.50px;top:416.68px;font-size:14.2px;line-height:14.2px;color:#222;font-weight:normal;">A02</div>
<div class="t" style="left:501.00px;top:416.51px;font-size:14.4px;line-height:14.4px;color:#222;font-weight:normal;">121112006</div>
<div class="t" style="left:1136.00px;top:416.85px;font-size:14px;line-height:14px;color:#222;font-weight:normal;">m2</div>
<div class="t" style="left:248.00px;width:1200px;text-align:right;top:416.60px;font-size:14.3px;line-height:14.3px;color:#222;font-weight:normal;">204,51</div>
<div class="t" style="left:338.00px;width:1200px;text-align:right;top:416.60px;font-size:14.3px;line-height:14.3px;color:#222;font-weight:normal;">0,00</div>
<div class="t" style="left:399.00px;width:1200px;text-align:right;top:416.60px;font-size:14.3px;line-height:14.3px;color:#222;font-weight:normal;">31</div>
<div class="r" style="left:366px;top:436px;width:33px;height:23px;background:#ffffd0"></div>
<div class="r" style="left:1542px;top:436px;width:57px;height:23px;background:#ffffd0"></div>
<div class="r" style="left:399px;top:436px;width:1px;height:23px;background:#d9d9d9"></div>
<div class="r" style="left:447px;top:436px;width:1px;height:23px;background:#d9d9d9"></div>
<div class="r" style="left:495px;top:436px;width:1px;height:23px;background:#d9d9d9"></div>
<div class="r" style="left:615px;top:436px;width:1px;height:23px;background:#d9d9d9"></div>
<div class="r" style="left:1131px;top:436px;width:1px;height:23px;background:#d9d9d9"></div>
<div class="r" style="left:1271px;top:436px;width:1px;height:23px;background:#d9d9d9"></div>
<div class="r" style="left:1361px;top:436px;width:1px;height:23px;background:#d9d9d9"></div>
<div class="r" style="left:1451px;top:436px;width:1px;height:23px;background:#d9d9d9"></div>
<div class="r" style="left:1541px;top:436px;width:1px;height:23px;background:#d9d9d9"></div>
<div class="r" style="left:366px;top:458px;width:1233px;height:1px;background:#d9d9d9"></div>
<div class="r" style="left:376px;top:440px;width:13px;height:13px;background:#fff;border:1px solid #6a6a6a;box-sizing:border-box"></div>
<div class="t" style="left:404.00px;top:439.51px;font-size:14.4px;line-height:14.4px;color:#222;font-weight:normal;">001</div>
<div class="t" style="left:451.50px;top:439.68px;font-size:14.2px;line-height:14.2px;color:#222;font-weight:normal;">A02</div>
<div class="t" style="left:501.00px;top:439.51px;font-size:14.4px;line-height:14.4px;color:#222;font-weight:normal;">121112007</div>
<div class="t" style="left:1136.00px;top:439.85px;font-size:14px;line-height:14px;color:#222;font-weight:normal;">m2</div>
<div class="t" style="left:248.00px;width:1200px;text-align:right;top:439.60px;font-size:14.3px;line-height:14.3px;color:#222;font-weight:normal;">247,78</div>
<div class="t" style="left:338.00px;width:1200px;text-align:right;top:439.60px;font-size:14.3px;line-height:14.3px;color:#222;font-weight:normal;">0,00</div>
<div class="t" style="left:399.00px;width:1200px;text-align:right;top:439.60px;font-size:14.3px;line-height:14.3px;color:#222;font-weight:normal;">38</div>
<div class="r" style="left:399px;top:459px;width:1px;height:23px;background:#d9d9d9"></div>
<div class="r" style="left:447px;top:459px;width:1px;height:23px;background:#d9d9d9"></div>
<div class="r" style="left:495px;top:459px;width:1px;height:23px;background:#d9d9d9"></div>
<div class="r" style="left:615px;top:459px;width:1px;height:23px;background:#d9d9d9"></div>
<div class="r" style="left:1131px;top:459px;width:1px;height:23px;background:#d9d9d9"></div>
<div class="r" style="left:1271px;top:459px;width:1px;height:23px;background:#d9d9d9"></div>
<div class="r" style="left:1361px;top:459px;width:1px;height:23px;background:#d9d9d9"></div>
<div class="r" style="left:1451px;top:459px;width:1px;height:23px;background:#d9d9d9"></div>
<div class="r" style="left:1541px;top:459px;width:1px;height:23px;background:#d9d9d9"></div>
<div class="r" style="left:366px;top:481px;width:1233px;height:1px;background:#d9d9d9"></div>
<div class="t" style="left:501.00px;top:462.51px;font-size:14.4px;line-height:14.4px;color:#222;font-weight:normal;">1211511··</div>
<div class="r" style="left:366px;top:482px;width:33px;height:23px;background:#ffffd0"></div>
<div class="r" style="left:1542px;top:482px;width:57px;height:23px;background:#ffffd0"></div>
<div class="r" style="left:399px;top:482px;width:1px;height:23px;background:#d9d9d9"></div>
<div class="r" style="left:447px;top:482px;width:1px;height:23px;background:#d9d9d9"></div>
<div class="r" style="left:495px;top:482px;width:1px;height:23px;background:#d9d9d9"></div>
<div class="r" style="left:615px;top:482px;width:1px;height:23px;background:#d9d9d9"></div>
<div class="r" style="left:1131px;top:482px;width:1px;height:23px;background:#d9d9d9"></div>
<div class="r" style="left:1271px;top:482px;width:1px;height:23px;background:#d9d9d9"></div>
<div class="r" style="left:1361px;top:482px;width:1px;height:23px;background:#d9d9d9"></div>
<div class="r" style="left:1451px;top:482px;width:1px;height:23px;background:#d9d9d9"></div>
<div class="r" style="left:1541px;top:482px;width:1px;height:23px;background:#d9d9d9"></div>
<div class="r" style="left:366px;top:504px;width:1233px;height:1px;background:#d9d9d9"></div>
<div class="r" style="left:376px;top:486px;width:13px;height:13px;background:#fff;border:1px solid #6a6a6a;box-sizing:border-box"></div>
<div class="t" style="left:404.00px;top:485.51px;font-size:14.4px;line-height:14.4px;color:#222;font-weight:normal;">001</div>
<div class="t" style="left:451.50px;top:485.68px;font-size:14.2px;line-height:14.2px;color:#222;font-weight:normal;">A02</div>
<div class="t" style="left:501.00px;top:485.51px;font-size:14.4px;line-height:14.4px;color:#222;font-weight:normal;">121151103</div>
<div class="t" style="left:1136.00px;top:485.85px;font-size:14px;line-height:14px;color:#222;font-weight:normal;">m2</div>
<div class="t" style="left:248.00px;width:1200px;text-align:right;top:485.60px;font-size:14.3px;line-height:14.3px;color:#222;font-weight:normal;">32,28</div>
<div class="t" style="left:338.00px;width:1200px;text-align:right;top:485.60px;font-size:14.3px;line-height:14.3px;color:#222;font-weight:normal;">0,00</div>
<div class="t" style="left:399.00px;width:1200px;text-align:right;top:485.60px;font-size:14.3px;line-height:14.3px;color:#222;font-weight:normal;">5</div>
<div class="r" style="left:366px;top:505px;width:33px;height:23px;background:#ffffd0"></div>
<div class="r" style="left:1542px;top:505px;width:57px;height:23px;background:#ffffd0"></div>
<div class="r" style="left:399px;top:505px;width:1px;height:23px;background:#d9d9d9"></div>
<div class="r" style="left:447px;top:505px;width:1px;height:23px;background:#d9d9d9"></div>
<div class="r" style="left:495px;top:505px;width:1px;height:23px;background:#d9d9d9"></div>
<div class="r" style="left:615px;top:505px;width:1px;height:23px;background:#d9d9d9"></div>
<div class="r" style="left:1131px;top:505px;width:1px;height:23px;background:#d9d9d9"></div>
<div class="r" style="left:1271px;top:505px;width:1px;height:23px;background:#d9d9d9"></div>
<div class="r" style="left:1361px;top:505px;width:1px;height:23px;background:#d9d9d9"></div>
<div class="r" style="left:1451px;top:505px;width:1px;height:23px;background:#d9d9d9"></div>
<div class="r" style="left:1541px;top:505px;width:1px;height:23px;background:#d9d9d9"></div>
<div class="r" style="left:366px;top:527px;width:1233px;height:1px;background:#d9d9d9"></div>
<div class="r" style="left:376px;top:509px;width:13px;height:13px;background:#fff;border:1px solid #6a6a6a;box-sizing:border-box"></div>
<div class="t" style="left:404.00px;top:508.51px;font-size:14.4px;line-height:14.4px;color:#222;font-weight:normal;">001</div>
<div class="t" style="left:451.50px;top:508.68px;font-size:14.2px;line-height:14.2px;color:#222;font-weight:normal;">A02</div>
<div class="t" style="left:501.00px;top:508.51px;font-size:14.4px;line-height:14.4px;color:#222;font-weight:normal;">121151104</div>
<div class="t" style="left:1136.00px;top:508.85px;font-size:14px;line-height:14px;color:#222;font-weight:normal;">m2</div>
<div class="t" style="left:248.00px;width:1200px;text-align:right;top:508.60px;font-size:14.3px;line-height:14.3px;color:#222;font-weight:normal;">37,27</div>
<div class="t" style="left:338.00px;width:1200px;text-align:right;top:508.60px;font-size:14.3px;line-height:14.3px;color:#222;font-weight:normal;">0,00</div>
<div class="t" style="left:399.00px;width:1200px;text-align:right;top:508.60px;font-size:14.3px;line-height:14.3px;color:#222;font-weight:normal;">5</div>
<div class="r" style="left:366px;top:528px;width:33px;height:23px;background:#ffffd0"></div>
<div class="r" style="left:1542px;top:528px;width:57px;height:23px;background:#ffffd0"></div>
<div class="r" style="left:400px;top:528px;width:1141px;height:23px;background:#d6d6d6"></div>
<div class="r" style="left:399px;top:528px;width:1px;height:23px;background:#d9d9d9"></div>
<div class="r" style="left:447px;top:528px;width:1px;height:23px;background:#d9d9d9"></div>
<div class="r" style="left:495px;top:528px;width:1px;height:23px;background:#d9d9d9"></div>
<div class="r" style="left:615px;top:528px;width:1px;height:23px;background:#d9d9d9"></div>
<div class="r" style="left:1131px;top:528px;width:1px;height:23px;background:#d9d9d9"></div>
<div class="r" style="left:1271px;top:528px;width:1px;height:23px;background:#d9d9d9"></div>
<div class="r" style="left:1361px;top:528px;width:1px;height:23px;background:#d9d9d9"></div>
<div class="r" style="left:1451px;top:528px;width:1px;height:23px;background:#d9d9d9"></div>
<div class="r" style="left:1541px;top:528px;width:1px;height:23px;background:#d9d9d9"></div>
<div class="r" style="left:366px;top:550px;width:1233px;height:1px;background:#d9d9d9"></div>
<div class="r" style="left:376px;top:532px;width:13px;height:13px;background:#fff;border:1px solid #6a6a6a;box-sizing:border-box"></div>
<div class="t" style="left:404.00px;top:531.51px;font-size:14.4px;line-height:14.4px;color:#222;font-weight:normal;">001</div>
<div class="t" style="left:451.50px;top:531.68px;font-size:14.2px;line-height:14.2px;color:#222;font-weight:normal;">A02</div>
<div class="t" style="left:501.00px;top:531.51px;font-size:14.4px;line-height:14.4px;color:#222;font-weight:normal;">121151105</div>
<div class="t" style="left:1136.00px;top:531.85px;font-size:14px;line-height:14px;color:#222;font-weight:normal;">m2</div>
<div class="t" style="left:248.00px;width:1200px;text-align:right;top:531.60px;font-size:14.3px;line-height:14.3px;color:#222;font-weight:normal;">41,86</div>
<div class="t" style="left:338.00px;width:1200px;text-align:right;top:531.60px;font-size:14.3px;line-height:14.3px;color:#222;font-weight:normal;">0,00</div>
<div class="t" style="left:399.00px;width:1200px;text-align:right;top:531.60px;font-size:14.3px;line-height:14.3px;color:#222;font-weight:normal;">6</div>
<div class="r" style="left:366px;top:551px;width:33px;height:23px;background:#ffffd0"></div>
<div class="r" style="left:1542px;top:551px;width:57px;height:23px;background:#ffffd0"></div>
<div class="r" style="left:399px;top:551px;width:1px;height:23px;background:#d9d9d9"></div>
<div class="r" style="left:447px;top:551px;width:1px;height:23px;background:#d9d9d9"></div>
<div class="r" style="left:495px;top:551px;width:1px;height:23px;background:#d9d9d9"></div>
<div class="r" style="left:615px;top:551px;width:1px;height:23px;background:#d9d9d9"></div>
<div class="r" style="left:1131px;top:551px;width:1px;height:23px;background:#d9d9d9"></div>
<div class="r" style="left:1271px;top:551px;width:1px;height:23px;background:#d9d9d9"></div>
<div class="r" style="left:1361px;top:551px;width:1px;height:23px;background:#d9d9d9"></div>
<div class="r" style="left:1451px;top:551px;width:1px;height:23px;background:#d9d9d9"></div>
<div class="r" style="left:1541px;top:551px;width:1px;height:23px;background:#d9d9d9"></div>
<div class="r" style="left:366px;top:573px;width:1233px;height:1px;background:#d9d9d9"></div>
<div class="r" style="left:376px;top:555px;width:13px;height:13px;background:#fff;border:1px solid #6a6a6a;box-sizing:border-box"></div>
<div class="t" style="left:404.00px;top:554.51px;font-size:14.4px;line-height:14.4px;color:#222;font-weight:normal;">001</div>
<div class="t" style="left:451.50px;top:554.68px;font-size:14.2px;line-height:14.2px;color:#222;font-weight:normal;">A02</div>
<div class="t" style="left:501.00px;top:554.51px;font-size:14.4px;line-height:14.4px;color:#222;font-weight:normal;">121151106</div>
<div class="t" style="left:1136.00px;top:554.85px;font-size:14px;line-height:14px;color:#222;font-weight:normal;">m2</div>
<div class="t" style="left:248.00px;width:1200px;text-align:right;top:554.60px;font-size:14.3px;line-height:14.3px;color:#222;font-weight:normal;">52,75</div>
<div class="t" style="left:338.00px;width:1200px;text-align:right;top:554.60px;font-size:14.3px;line-height:14.3px;color:#222;font-weight:normal;">0,00</div>
<div class="t" style="left:399.00px;width:1200px;text-align:right;top:554.60px;font-size:14.3px;line-height:14.3px;color:#222;font-weight:normal;">8</div>
<div class="r" style="left:366px;top:574px;width:33px;height:23px;background:#ffffd0"></div>
<div class="r" style="left:1542px;top:574px;width:57px;height:23px;background:#ffffd0"></div>
<div class="r" style="left:399px;top:574px;width:1px;height:23px;background:#d9d9d9"></div>
<div class="r" style="left:447px;top:574px;width:1px;height:23px;background:#d9d9d9"></div>
<div class="r" style="left:495px;top:574px;width:1px;height:23px;background:#d9d9d9"></div>
<div class="r" style="left:615px;top:574px;width:1px;height:23px;background:#d9d9d9"></div>
<div class="r" style="left:1131px;top:574px;width:1px;height:23px;background:#d9d9d9"></div>
<div class="r" style="left:1271px;top:574px;width:1px;height:23px;background:#d9d9d9"></div>
<div class="r" style="left:1361px;top:574px;width:1px;height:23px;background:#d9d9d9"></div>
<div class="r" style="left:1451px;top:574px;width:1px;height:23px;background:#d9d9d9"></div>
<div class="r" style="left:1541px;top:574px;width:1px;height:23px;background:#d9d9d9"></div>
<div class="r" style="left:366px;top:596px;width:1233px;height:1px;background:#d9d9d9"></div>
<div class="r" style="left:376px;top:578px;width:13px;height:13px;background:#fff;border:1px solid #6a6a6a;box-sizing:border-box"></div>
<div class="t" style="left:404.00px;top:577.51px;font-size:14.4px;line-height:14.4px;color:#222;font-weight:normal;">001</div>
<div class="t" style="left:451.50px;top:577.68px;font-size:14.2px;line-height:14.2px;color:#222;font-weight:normal;">A02</div>
<div class="t" style="left:501.00px;top:577.51px;font-size:14.4px;line-height:14.4px;color:#222;font-weight:normal;">121151107</div>
<div class="t" style="left:1136.00px;top:577.85px;font-size:14px;line-height:14px;color:#222;font-weight:normal;">m2</div>
<div class="t" style="left:248.00px;width:1200px;text-align:right;top:577.60px;font-size:14.3px;line-height:14.3px;color:#222;font-weight:normal;">64,95</div>
<div class="t" style="left:338.00px;width:1200px;text-align:right;top:577.60px;font-size:14.3px;line-height:14.3px;color:#222;font-weight:normal;">0,00</div>
<div class="t" style="left:399.00px;width:1200px;text-align:right;top:577.60px;font-size:14.3px;line-height:14.3px;color:#222;font-weight:normal;">10</div>
<div class="r" style="left:366px;top:597px;width:33px;height:23px;background:#ffffd0"></div>
<div class="r" style="left:1542px;top:597px;width:57px;height:23px;background:#ffffd0"></div>
<div class="r" style="left:399px;top:597px;width:1px;height:23px;background:#d9d9d9"></div>
<div class="r" style="left:447px;top:597px;width:1px;height:23px;background:#d9d9d9"></div>
<div class="r" style="left:495px;top:597px;width:1px;height:23px;background:#d9d9d9"></div>
<div class="r" style="left:615px;top:597px;width:1px;height:23px;background:#d9d9d9"></div>
<div class="r" style="left:1131px;top:597px;width:1px;height:23px;background:#d9d9d9"></div>
<div class="r" style="left:1271px;top:597px;width:1px;height:23px;background:#d9d9d9"></div>
<div class="r" style="left:1361px;top:597px;width:1px;height:23px;background:#d9d9d9"></div>
<div class="r" style="left:1451px;top:597px;width:1px;height:23px;background:#d9d9d9"></div>
<div class="r" style="left:1541px;top:597px;width:1px;height:23px;background:#d9d9d9"></div>
<div class="r" style="left:366px;top:619px;width:1233px;height:1px;background:#d9d9d9"></div>
<div class="r" style="left:376px;top:601px;width:13px;height:13px;background:#fff;border:1px solid #6a6a6a;box-sizing:border-box"></div>
<div class="t" style="left:404.00px;top:600.51px;font-size:14.4px;line-height:14.4px;color:#222;font-weight:normal;">001</div>
<div class="t" style="left:451.50px;top:600.68px;font-size:14.2px;line-height:14.2px;color:#222;font-weight:normal;">A02</div>
<div class="t" style="left:501.00px;top:600.51px;font-size:14.4px;line-height:14.4px;color:#222;font-weight:normal;">121151113</div>
<div class="t" style="left:1136.00px;top:600.85px;font-size:14px;line-height:14px;color:#222;font-weight:normal;">m2</div>
<div class="t" style="left:248.00px;width:1200px;text-align:right;top:600.60px;font-size:14.3px;line-height:14.3px;color:#222;font-weight:normal;">15,61</div>
<div class="t" style="left:338.00px;width:1200px;text-align:right;top:600.60px;font-size:14.3px;line-height:14.3px;color:#222;font-weight:normal;">0,00</div>
<div class="t" style="left:399.00px;width:1200px;text-align:right;top:600.60px;font-size:14.3px;line-height:14.3px;color:#222;font-weight:normal;">2</div>
<div class="r" style="left:366px;top:620px;width:33px;height:23px;background:#ffffd0"></div>
<div class="r" style="left:1542px;top:620px;width:57px;height:23px;background:#ffffd0"></div>
<div class="r" style="left:399px;top:620px;width:1px;height:23px;background:#d9d9d9"></div>
<div class="r" style="left:447px;top:620px;width:1px;height:23px;background:#d9d9d9"></div>
<div class="r" style="left:495px;top:620px;width:1px;height:23px;background:#d9d9d9"></div>
<div class="r" style="left:615px;top:620px;width:1px;height:23px;background:#d9d9d9"></div>
<div class="r" style="left:1131px;top:620px;width:1px;height:23px;background:#d9d9d9"></div>
<div class="r" style="left:1271px;top:620px;width:1px;height:23px;background:#d9d9d9"></div>
<div class="r" style="left:1361px;top:620px;width:1px;height:23px;background:#d9d9d9"></div>
<div class="r" style="left:1451px;top:620px;width:1px;height:23px;background:#d9d9d9"></div>
<div class="r" style="left:1541px;top:620px;width:1px;height:23px;background:#d9d9d9"></div>
<div class="r" style="left:366px;top:642px;width:1233px;height:1px;background:#d9d9d9"></div>
<div class="r" style="left:376px;top:624px;width:13px;height:13px;background:#fff;border:1px solid #6a6a6a;box-sizing:border-box"></div>
<div class="t" style="left:404.00px;top:623.51px;font-size:14.4px;line-height:14.4px;color:#222;font-weight:normal;">001</div>
<div class="t" style="left:451.50px;top:623.68px;font-size:14.2px;line-height:14.2px;color:#222;font-weight:normal;">A02</div>
<div class="t" style="left:501.00px;top:623.51px;font-size:14.4px;line-height:14.4px;color:#222;font-weight:normal;">121151114</div>
<div class="t" style="left:1136.00px;top:623.85px;font-size:14px;line-height:14px;color:#222;font-weight:normal;">m2</div>
<div class="t" style="left:248.00px;width:1200px;text-align:right;top:623.60px;font-size:14.3px;line-height:14.3px;color:#222;font-weight:normal;">17,99</div>
<div class="t" style="left:338.00px;width:1200px;text-align:right;top:623.60px;font-size:14.3px;line-height:14.3px;color:#222;font-weight:normal;">0,00</div>
<div class="t" style="left:399.00px;width:1200px;text-align:right;top:623.60px;font-size:14.3px;line-height:14.3px;color:#222;font-weight:normal;">2</div>
<div class="r" style="left:366px;top:643px;width:33px;height:23px;background:#ffffd0"></div>
<div class="r" style="left:1542px;top:643px;width:57px;height:23px;background:#ffffd0"></div>
<div class="r" style="left:399px;top:643px;width:1px;height:23px;background:#d9d9d9"></div>
<div class="r" style="left:447px;top:643px;width:1px;height:23px;background:#d9d9d9"></div>
<div class="r" style="left:495px;top:643px;width:1px;height:23px;background:#d9d9d9"></div>
<div class="r" style="left:615px;top:643px;width:1px;height:23px;background:#d9d9d9"></div>
<div class="r" style="left:1131px;top:643px;width:1px;height:23px;background:#d9d9d9"></div>
<div class="r" style="left:1271px;top:643px;width:1px;height:23px;background:#d9d9d9"></div>
<div class="r" style="left:1361px;top:643px;width:1px;height:23px;background:#d9d9d9"></div>
<div class="r" style="left:1451px;top:643px;width:1px;height:23px;background:#d9d9d9"></div>
<div class="r" style="left:1541px;top:643px;width:1px;height:23px;background:#d9d9d9"></div>
<div class="r" style="left:366px;top:665px;width:1233px;height:1px;background:#d9d9d9"></div>
<div class="r" style="left:376px;top:647px;width:13px;height:13px;background:#fff;border:1px solid #6a6a6a;box-sizing:border-box"></div>
<div class="t" style="left:404.00px;top:646.51px;font-size:14.4px;line-height:14.4px;color:#222;font-weight:normal;">001</div>
<div class="t" style="left:451.50px;top:646.68px;font-size:14.2px;line-height:14.2px;color:#222;font-weight:normal;">A02</div>
<div class="t" style="left:501.00px;top:646.51px;font-size:14.4px;line-height:14.4px;color:#222;font-weight:normal;">121151115</div>
<div class="t" style="left:1136.00px;top:646.85px;font-size:14px;line-height:14px;color:#222;font-weight:normal;">m2</div>
<div class="t" style="left:248.00px;width:1200px;text-align:right;top:646.60px;font-size:14.3px;line-height:14.3px;color:#222;font-weight:normal;">20,39</div>
<div class="t" style="left:338.00px;width:1200px;text-align:right;top:646.60px;font-size:14.3px;line-height:14.3px;color:#222;font-weight:normal;">0,00</div>
<div class="t" style="left:399.00px;width:1200px;text-align:right;top:646.60px;font-size:14.3px;line-height:14.3px;color:#222;font-weight:normal;">3</div>
<div class="r" style="left:366px;top:666px;width:33px;height:23px;background:#ffffd0"></div>
<div class="r" style="left:1542px;top:666px;width:57px;height:23px;background:#ffffd0"></div>
<div class="r" style="left:399px;top:666px;width:1px;height:23px;background:#d9d9d9"></div>
<div class="r" style="left:447px;top:666px;width:1px;height:23px;background:#d9d9d9"></div>
<div class="r" style="left:495px;top:666px;width:1px;height:23px;background:#d9d9d9"></div>
<div class="r" style="left:615px;top:666px;width:1px;height:23px;background:#d9d9d9"></div>
<div class="r" style="left:1131px;top:666px;width:1px;height:23px;background:#d9d9d9"></div>
<div class="r" style="left:1271px;top:666px;width:1px;height:23px;background:#d9d9d9"></div>
<div class="r" style="left:1361px;top:666px;width:1px;height:23px;background:#d9d9d9"></div>
<div class="r" style="left:1451px;top:666px;width:1px;height:23px;background:#d9d9d9"></div>
<div class="r" style="left:1541px;top:666px;width:1px;height:23px;background:#d9d9d9"></div>
<div class="r" style="left:366px;top:688px;width:1233px;height:1px;background:#d9d9d9"></div>
<div class="r" style="left:376px;top:670px;width:13px;height:13px;background:#fff;border:1px solid #6a6a6a;box-sizing:border-box"></div>
<div class="t" style="left:404.00px;top:669.51px;font-size:14.4px;line-height:14.4px;color:#222;font-weight:normal;">001</div>
<div class="t" style="left:451.50px;top:669.68px;font-size:14.2px;line-height:14.2px;color:#222;font-weight:normal;">A02</div>
<div class="t" style="left:501.00px;top:669.51px;font-size:14.4px;line-height:14.4px;color:#222;font-weight:normal;">121151116</div>
<div class="t" style="left:1136.00px;top:669.85px;font-size:14px;line-height:14px;color:#222;font-weight:normal;">m2</div>
<div class="t" style="left:248.00px;width:1200px;text-align:right;top:669.60px;font-size:14.3px;line-height:14.3px;color:#222;font-weight:normal;">25,30</div>
<div class="t" style="left:338.00px;width:1200px;text-align:right;top:669.60px;font-size:14.3px;line-height:14.3px;color:#222;font-weight:normal;">0,00</div>
<div class="t" style="left:399.00px;width:1200px;text-align:right;top:669.60px;font-size:14.3px;line-height:14.3px;color:#222;font-weight:normal;">3</div>
<div class="r" style="left:366px;top:689px;width:33px;height:23px;background:#ffffd0"></div>
<div class="r" style="left:1542px;top:689px;width:57px;height:23px;background:#ffffd0"></div>
<div class="r" style="left:399px;top:689px;width:1px;height:23px;background:#d9d9d9"></div>
<div class="r" style="left:447px;top:689px;width:1px;height:23px;background:#d9d9d9"></div>
<div class="r" style="left:495px;top:689px;width:1px;height:23px;background:#d9d9d9"></div>
<div class="r" style="left:615px;top:689px;width:1px;height:23px;background:#d9d9d9"></div>
<div class="r" style="left:1131px;top:689px;width:1px;height:23px;background:#d9d9d9"></div>
<div class="r" style="left:1271px;top:689px;width:1px;height:23px;background:#d9d9d9"></div>
<div class="r" style="left:1361px;top:689px;width:1px;height:23px;background:#d9d9d9"></div>
<div class="r" style="left:1451px;top:689px;width:1px;height:23px;background:#d9d9d9"></div>
<div class="r" style="left:1541px;top:689px;width:1px;height:23px;background:#d9d9d9"></div>
<div class="r" style="left:366px;top:711px;width:1233px;height:1px;background:#d9d9d9"></div>
<div class="r" style="left:376px;top:693px;width:13px;height:13px;background:#fff;border:1px solid #6a6a6a;box-sizing:border-box"></div>
<div class="t" style="left:404.00px;top:692.51px;font-size:14.4px;line-height:14.4px;color:#222;font-weight:normal;">001</div>
<div class="t" style="left:451.50px;top:692.68px;font-size:14.2px;line-height:14.2px;color:#222;font-weight:normal;">A02</div>
<div class="t" style="left:501.00px;top:692.51px;font-size:14.4px;line-height:14.4px;color:#222;font-weight:normal;">121151117</div>
<div class="t" style="left:1136.00px;top:692.85px;font-size:14px;line-height:14px;color:#222;font-weight:normal;">m2</div>
<div class="t" style="left:248.00px;width:1200px;text-align:right;top:692.60px;font-size:14.3px;line-height:14.3px;color:#222;font-weight:normal;">31,22</div>
<div class="t" style="left:338.00px;width:1200px;text-align:right;top:692.60px;font-size:14.3px;line-height:14.3px;color:#222;font-weight:normal;">0,00</div>
<div class="t" style="left:399.00px;width:1200px;text-align:right;top:692.60px;font-size:14.3px;line-height:14.3px;color:#222;font-weight:normal;">4</div>
<div class="r" style="left:366px;top:712px;width:33px;height:23px;background:#ffffd0"></div>
<div class="r" style="left:1542px;top:712px;width:57px;height:23px;background:#ffffd0"></div>
<div class="r" style="left:399px;top:712px;width:1px;height:23px;background:#d9d9d9"></div>
<div class="r" style="left:447px;top:712px;width:1px;height:23px;background:#d9d9d9"></div>
<div class="r" style="left:495px;top:712px;width:1px;height:23px;background:#d9d9d9"></div>
<div class="r" style="left:615px;top:712px;width:1px;height:23px;background:#d9d9d9"></div>
<div class="r" style="left:1131px;top:712px;width:1px;height:23px;background:#d9d9d9"></div>
<div class="r" style="left:1271px;top:712px;width:1px;height:23px;background:#d9d9d9"></div>
<div class="r" style="left:1361px;top:712px;width:1px;height:23px;background:#d9d9d9"></div>
<div class="r" style="left:1451px;top:712px;width:1px;height:23px;background:#d9d9d9"></div>
<div class="r" style="left:1541px;top:712px;width:1px;height:23px;background:#d9d9d9"></div>
<div class="r" style="left:366px;top:734px;width:1233px;height:1px;background:#d9d9d9"></div>
<div class="r" style="left:376px;top:716px;width:13px;height:13px;background:#fff;border:1px solid #6a6a6a;box-sizing:border-box"></div>
<div class="t" style="left:404.00px;top:715.51px;font-size:14.4px;line-height:14.4px;color:#222;font-weight:normal;">001</div>
<div class="t" style="left:451.50px;top:715.68px;font-size:14.2px;line-height:14.2px;color:#222;font-weight:normal;">A02</div>
<div class="t" style="left:501.00px;top:715.51px;font-size:14.4px;line-height:14.4px;color:#222;font-weight:normal;">121151123</div>
<div class="t" style="left:1136.00px;top:715.85px;font-size:14px;line-height:14px;color:#222;font-weight:normal;">m2</div>
<div class="t" style="left:248.00px;width:1200px;text-align:right;top:715.60px;font-size:14.3px;line-height:14.3px;color:#222;font-weight:normal;">8,11</div>
<div class="t" style="left:338.00px;width:1200px;text-align:right;top:715.60px;font-size:14.3px;line-height:14.3px;color:#222;font-weight:normal;">0,00</div>
<div class="t" style="left:399.00px;width:1200px;text-align:right;top:715.60px;font-size:14.3px;line-height:14.3px;color:#222;font-weight:normal;">1</div>
<div class="r" style="left:366px;top:735px;width:33px;height:23px;background:#ffffd0"></div>
<div class="r" style="left:1542px;top:735px;width:57px;height:23px;background:#ffffd0"></div>
<div class="r" style="left:399px;top:735px;width:1px;height:23px;background:#d9d9d9"></div>
<div class="r" style="left:447px;top:735px;width:1px;height:23px;background:#d9d9d9"></div>
<div class="r" style="left:495px;top:735px;width:1px;height:23px;background:#d9d9d9"></div>
<div class="r" style="left:615px;top:735px;width:1px;height:23px;background:#d9d9d9"></div>
<div class="r" style="left:1131px;top:735px;width:1px;height:23px;background:#d9d9d9"></div>
<div class="r" style="left:1271px;top:735px;width:1px;height:23px;background:#d9d9d9"></div>
<div class="r" style="left:1361px;top:735px;width:1px;height:23px;background:#d9d9d9"></div>
<div class="r" style="left:1451px;top:735px;width:1px;height:23px;background:#d9d9d9"></div>
<div class="r" style="left:1541px;top:735px;width:1px;height:23px;background:#d9d9d9"></div>
<div class="r" style="left:366px;top:757px;width:1233px;height:1px;background:#d9d9d9"></div>
<div class="r" style="left:376px;top:739px;width:13px;height:13px;background:#fff;border:1px solid #6a6a6a;box-sizing:border-box"></div>
<div class="t" style="left:404.00px;top:738.51px;font-size:14.4px;line-height:14.4px;color:#222;font-weight:normal;">001</div>
<div class="t" style="left:451.50px;top:738.68px;font-size:14.2px;line-height:14.2px;color:#222;font-weight:normal;">A02</div>
<div class="t" style="left:501.00px;top:738.51px;font-size:14.4px;line-height:14.4px;color:#222;font-weight:normal;">121151124</div>
<div class="t" style="left:1136.00px;top:738.85px;font-size:14px;line-height:14px;color:#222;font-weight:normal;">m2</div>
<div class="t" style="left:248.00px;width:1200px;text-align:right;top:738.60px;font-size:14.3px;line-height:14.3px;color:#222;font-weight:normal;">9,37</div>
<div class="t" style="left:338.00px;width:1200px;text-align:right;top:738.60px;font-size:14.3px;line-height:14.3px;color:#222;font-weight:normal;">0,00</div>
<div class="t" style="left:399.00px;width:1200px;text-align:right;top:738.60px;font-size:14.3px;line-height:14.3px;color:#222;font-weight:normal;">1</div>
<div class="r" style="left:366px;top:758px;width:33px;height:23px;background:#ffffd0"></div>
<div class="r" style="left:1542px;top:758px;width:57px;height:23px;background:#ffffd0"></div>
<div class="r" style="left:399px;top:758px;width:1px;height:23px;background:#d9d9d9"></div>
<div class="r" style="left:447px;top:758px;width:1px;height:23px;background:#d9d9d9"></div>
<div class="r" style="left:495px;top:758px;width:1px;height:23px;background:#d9d9d9"></div>
<div class="r" style="left:615px;top:758px;width:1px;height:23px;background:#d9d9d9"></div>
<div class="r" style="left:1131px;top:758px;width:1px;height:23px;background:#d9d9d9"></div>
<div class="r" style="left:1271px;top:758px;width:1px;height:23px;background:#d9d9d9"></div>
<div class="r" style="left:1361px;top:758px;width:1px;height:23px;background:#d9d9d9"></div>
<div class="r" style="left:1451px;top:758px;width:1px;height:23px;background:#d9d9d9"></div>
<div class="r" style="left:1541px;top:758px;width:1px;height:23px;background:#d9d9d9"></div>
<div class="r" style="left:366px;top:780px;width:1233px;height:1px;background:#d9d9d9"></div>
<div class="r" style="left:376px;top:762px;width:13px;height:13px;background:#fff;border:1px solid #6a6a6a;box-sizing:border-box"></div>
<div class="t" style="left:404.00px;top:761.51px;font-size:14.4px;line-height:14.4px;color:#222;font-weight:normal;">001</div>
<div class="t" style="left:451.50px;top:761.68px;font-size:14.2px;line-height:14.2px;color:#222;font-weight:normal;">A02</div>
<div class="t" style="left:501.00px;top:761.51px;font-size:14.4px;line-height:14.4px;color:#222;font-weight:normal;">121151125</div>
<div class="t" style="left:1136.00px;top:761.85px;font-size:14px;line-height:14px;color:#222;font-weight:normal;">m2</div>
<div class="t" style="left:248.00px;width:1200px;text-align:right;top:761.60px;font-size:14.3px;line-height:14.3px;color:#222;font-weight:normal;">10,49</div>
<div class="t" style="left:338.00px;width:1200px;text-align:right;top:761.60px;font-size:14.3px;line-height:14.3px;color:#222;font-weight:normal;">0,00</div>
<div class="t" style="left:399.00px;width:1200px;text-align:right;top:761.60px;font-size:14.3px;line-height:14.3px;color:#222;font-weight:normal;">1</div>
<div class="r" style="left:366px;top:781px;width:33px;height:23px;background:#ffffd0"></div>
<div class="r" style="left:1542px;top:781px;width:57px;height:23px;background:#ffffd0"></div>
<div class="r" style="left:399px;top:781px;width:1px;height:23px;background:#d9d9d9"></div>
<div class="r" style="left:447px;top:781px;width:1px;height:23px;background:#d9d9d9"></div>
<div class="r" style="left:495px;top:781px;width:1px;height:23px;background:#d9d9d9"></div>
<div class="r" style="left:615px;top:781px;width:1px;height:23px;background:#d9d9d9"></div>
<div class="r" style="left:1131px;top:781px;width:1px;height:23px;background:#d9d9d9"></div>
<div class="r" style="left:1271px;top:781px;width:1px;height:23px;background:#d9d9d9"></div>
<div class="r" style="left:1361px;top:781px;width:1px;height:23px;background:#d9d9d9"></div>
<div class="r" style="left:1451px;top:781px;width:1px;height:23px;background:#d9d9d9"></div>
<div class="r" style="left:1541px;top:781px;width:1px;height:23px;background:#d9d9d9"></div>
<div class="r" style="left:366px;top:803px;width:1233px;height:1px;background:#d9d9d9"></div>
<div class="r" style="left:376px;top:785px;width:13px;height:13px;background:#fff;border:1px solid #6a6a6a;box-sizing:border-box"></div>
<div class="t" style="left:404.00px;top:784.51px;font-size:14.4px;line-height:14.4px;color:#222;font-weight:normal;">001</div>
<div class="t" style="left:451.50px;top:784.68px;font-size:14.2px;line-height:14.2px;color:#222;font-weight:normal;">A02</div>
<div class="t" style="left:501.00px;top:784.51px;font-size:14.4px;line-height:14.4px;color:#222;font-weight:normal;">121151126</div>
<div class="t" style="left:1136.00px;top:784.85px;font-size:14px;line-height:14px;color:#222;font-weight:normal;">m2</div>
<div class="t" style="left:248.00px;width:1200px;text-align:right;top:784.60px;font-size:14.3px;line-height:14.3px;color:#222;font-weight:normal;">13,20</div>
<div class="t" style="left:338.00px;width:1200px;text-align:right;top:784.60px;font-size:14.3px;line-height:14.3px;color:#222;font-weight:normal;">0,00</div>
<div class="t" style="left:399.00px;width:1200px;text-align:right;top:784.60px;font-size:14.3px;line-height:14.3px;color:#222;font-weight:normal;">2</div>
<div class="r" style="left:366px;top:804px;width:33px;height:23px;background:#ffffd0"></div>
<div class="r" style="left:1542px;top:804px;width:57px;height:23px;background:#ffffd0"></div>
<div class="r" style="left:399px;top:804px;width:1px;height:23px;background:#d9d9d9"></div>
<div class="r" style="left:447px;top:804px;width:1px;height:23px;background:#d9d9d9"></div>
<div class="r" style="left:495px;top:804px;width:1px;height:23px;background:#d9d9d9"></div>
<div class="r" style="left:615px;top:804px;width:1px;height:23px;background:#d9d9d9"></div>
<div class="r" style="left:1131px;top:804px;width:1px;height:23px;background:#d9d9d9"></div>
<div class="r" style="left:1271px;top:804px;width:1px;height:23px;background:#d9d9d9"></div>
<div class="r" style="left:1361px;top:804px;width:1px;height:23px;background:#d9d9d9"></div>
<div class="r" style="left:1451px;top:804px;width:1px;height:23px;background:#d9d9d9"></div>
<div class="r" style="left:1541px;top:804px;width:1px;height:23px;background:#d9d9d9"></div>
<div class="r" style="left:366px;top:826px;width:1233px;height:1px;background:#d9d9d9"></div>
<div class="r" style="left:376px;top:808px;width:13px;height:13px;background:#fff;border:1px solid #6a6a6a;box-sizing:border-box"></div>
<div class="t" style="left:404.00px;top:807.51px;font-size:14.4px;line-height:14.4px;color:#222;font-weight:normal;">001</div>
<div class="t" style="left:451.50px;top:807.68px;font-size:14.2px;line-height:14.2px;color:#222;font-weight:normal;">A02</div>
<div class="t" style="left:501.00px;top:807.51px;font-size:14.4px;line-height:14.4px;color:#222;font-weight:normal;">121151127</div>
<div class="t" style="left:1136.00px;top:807.85px;font-size:14px;line-height:14px;color:#222;font-weight:normal;">m2</div>
<div class="t" style="left:248.00px;width:1200px;text-align:right;top:807.60px;font-size:14.3px;line-height:14.3px;color:#222;font-weight:normal;">16,04</div>
<div class="t" style="left:338.00px;width:1200px;text-align:right;top:807.60px;font-size:14.3px;line-height:14.3px;color:#222;font-weight:normal;">0,00</div>
<div class="t" style="left:399.00px;width:1200px;text-align:right;top:807.60px;font-size:14.3px;line-height:14.3px;color:#222;font-weight:normal;">2</div>
<div class="r" style="left:399px;top:827px;width:1px;height:23px;background:#d9d9d9"></div>
<div class="r" style="left:447px;top:827px;width:1px;height:23px;background:#d9d9d9"></div>
<div class="r" style="left:495px;top:827px;width:1px;height:23px;background:#d9d9d9"></div>
<div class="r" style="left:615px;top:827px;width:1px;height:23px;background:#d9d9d9"></div>
<div class="r" style="left:1131px;top:827px;width:1px;height:23px;background:#d9d9d9"></div>
<div class="r" style="left:1271px;top:827px;width:1px;height:23px;background:#d9d9d9"></div>
<div class="r" style="left:1361px;top:827px;width:1px;height:23px;background:#d9d9d9"></div>
<div class="r" style="left:1451px;top:827px;width:1px;height:23px;background:#d9d9d9"></div>
<div class="r" style="left:1541px;top:827px;width:1px;height:23px;background:#d9d9d9"></div>
<div class="r" style="left:366px;top:849px;width:1233px;height:1px;background:#d9d9d9"></div>
<div class="t" style="left:501.00px;top:830.51px;font-size:14.4px;line-height:14.4px;color:#222;font-weight:normal;">1211112··</div>
<div class="r" style="left:366px;top:850px;width:33px;height:23px;background:#ffffd0"></div>
<div class="r" style="left:1542px;top:850px;width:57px;height:23px;background:#ffffd0"></div>
<div class="r" style="left:399px;top:850px;width:1px;height:23px;background:#d9d9d9"></div>
<div class="r" style="left:447px;top:850px;width:1px;height:23px;background:#d9d9d9"></div>
<div class="r" style="left:495px;top:850px;width:1px;height:23px;background:#d9d9d9"></div>
<div class="r" style="left:615px;top:850px;width:1px;height:23px;background:#d9d9d9"></div>
<div class="r" style="left:1131px;top:850px;width:1px;height:23px;background:#d9d9d9"></div>
<div class="r" style="left:1271px;top:850px;width:1px;height:23px;background:#d9d9d9"></div>
<div class="r" style="left:1361px;top:850px;width:1px;height:23px;background:#d9d9d9"></div>
<div class="r" style="left:1451px;top:850px;width:1px;height:23px;background:#d9d9d9"></div>
<div class="r" style="left:1541px;top:850px;width:1px;height:23px;background:#d9d9d9"></div>
<div class="r" style="left:366px;top:872px;width:1233px;height:1px;background:#d9d9d9"></div>
<div class="r" style="left:376px;top:854px;width:13px;height:13px;background:#fff;border:1px solid #6a6a6a;box-sizing:border-box"></div>
<div class="t" style="left:404.00px;top:853.51px;font-size:14.4px;line-height:14.4px;color:#222;font-weight:normal;">001</div>
<div class="t" style="left:451.50px;top:853.68px;font-size:14.2px;line-height:14.2px;color:#222;font-weight:normal;">A02</div>
<div class="t" style="left:501.00px;top:853.51px;font-size:14.4px;line-height:14.4px;color:#222;font-weight:normal;">121111201</div>
<div class="t" style="left:653.00px;top:853.85px;font-size:14px;line-height:14px;color:#222;font-weight:normal;">Odstranění lesní hrabanky</div>
<div class="t" style="left:1136.00px;top:853.85px;font-size:14px;line-height:14px;color:#222;font-weight:normal;">m2</div>
<div class="t" style="left:158.00px;width:1200px;text-align:right;top:853.60px;font-size:14.3px;line-height:14.3px;color:#222;font-weight:normal;">26,60</div>
<div class="t" style="left:248.00px;width:1200px;text-align:right;top:853.60px;font-size:14.3px;line-height:14.3px;color:#222;font-weight:normal;">17,01</div>
<div class="t" style="left:338.00px;width:1200px;text-align:right;top:853.60px;font-size:14.3px;line-height:14.3px;color:#222;font-weight:normal;">0,00</div>
<div class="t" style="left:399.00px;width:1200px;text-align:right;top:853.60px;font-size:14.3px;line-height:14.3px;color:#222;font-weight:normal;">2</div>
<div class="r" style="left:399px;top:873px;width:1px;height:23px;background:#d9d9d9"></div>
<div class="r" style="left:447px;top:873px;width:1px;height:23px;background:#d9d9d9"></div>
<div class="r" style="left:495px;top:873px;width:1px;height:23px;background:#d9d9d9"></div>
<div class="r" style="left:615px;top:873px;width:1px;height:23px;background:#d9d9d9"></div>
<div class="r" style="left:1131px;top:873px;width:1px;height:23px;background:#d9d9d9"></div>
<div class="r" style="left:1271px;top:873px;width:1px;height:23px;background:#d9d9d9"></div>
<div class="r" style="left:1361px;top:873px;width:1px;height:23px;background:#d9d9d9"></div>
<div class="r" style="left:1451px;top:873px;width:1px;height:23px;background:#d9d9d9"></div>
<div class="r" style="left:1541px;top:873px;width:1px;height:23px;background:#d9d9d9"></div>
<div class="r" style="left:366px;top:895px;width:1233px;height:1px;background:#d9d9d9"></div>
<div class="t" style="left:501.00px;top:876.51px;font-size:14.4px;line-height:14.4px;color:#222;font-weight:normal;">1211512··</div>
<div class="t" style="left:645.00px;top:875.60px;font-size:14.3px;line-height:14.3px;color:#2e2e2e;font-weight:bold;">Sejmutí lesní půdy strojně</div>
<div class="r" style="left:366px;top:896px;width:33px;height:23px;background:#ffffd0"></div>
<div class="r" style="left:1542px;top:896px;width:57px;height:23px;background:#ffffd0"></div>
<div class="r" style="left:399px;top:896px;width:1px;height:23px;background:#d9d9d9"></div>
<div class="r" style="left:447px;top:896px;width:1px;height:23px;background:#d9d9d9"></div>
<div class="r" style="left:495px;top:896px;width:1px;height:23px;background:#d9d9d9"></div>
<div class="r" style="left:615px;top:896px;width:1px;height:23px;background:#d9d9d9"></div>
<div class="r" style="left:1131px;top:896px;width:1px;height:23px;background:#d9d9d9"></div>
<div class="r" style="left:1271px;top:896px;width:1px;height:23px;background:#d9d9d9"></div>
<div class="r" style="left:1361px;top:896px;width:1px;height:23px;background:#d9d9d9"></div>
<div class="r" style="left:1451px;top:896px;width:1px;height:23px;background:#d9d9d9"></div>
<div class="r" style="left:1541px;top:896px;width:1px;height:23px;background:#d9d9d9"></div>
<div class="r" style="left:366px;top:918px;width:1233px;height:1px;background:#d9d9d9"></div>
<div class="r" style="left:376px;top:900px;width:13px;height:13px;background:#fff;border:1px solid #6a6a6a;box-sizing:border-box"></div>
<div class="t" style="left:404.00px;top:899.51px;font-size:14.4px;line-height:14.4px;color:#222;font-weight:normal;">001</div>
<div class="t" style="left:451.50px;top:899.68px;font-size:14.2px;line-height:14.2px;color:#222;font-weight:normal;">A02</div>
<div class="t" style="left:501.00px;top:899.51px;font-size:14.4px;line-height:14.4px;color:#222;font-weight:normal;">121151203</div>
<div class="t" style="left:653.00px;top:899.85px;font-size:14px;line-height:14px;color:#222;font-weight:normal;">Sejmutí lesní půdy plochy do 100 m2 tl vrstvy do 200 mm strojně</div>
<div class="t" style="left:1136.00px;top:899.85px;font-size:14px;line-height:14px;color:#222;font-weight:normal;">m2</div>
<div class="t" style="left:158.00px;width:1200px;text-align:right;top:899.60px;font-size:14.3px;line-height:14.3px;color:#222;font-weight:normal;">58,20</div>
<div class="t" style="left:248.00px;width:1200px;text-align:right;top:899.60px;font-size:14.3px;line-height:14.3px;color:#222;font-weight:normal;">37,27</div>
<div class="t" style="left:338.00px;width:1200px;text-align:right;top:899.60px;font-size:14.3px;line-height:14.3px;color:#222;font-weight:normal;">0,00</div>
<div class="t" style="left:399.00px;width:1200px;text-align:right;top:899.60px;font-size:14.3px;line-height:14.3px;color:#222;font-weight:normal;">5</div>
<div class="r" style="left:366px;top:919px;width:33px;height:23px;background:#ffffd0"></div>
<div class="r" style="left:1542px;top:919px;width:57px;height:23px;background:#ffffd0"></div>
<div class="r" style="left:399px;top:919px;width:1px;height:23px;background:#d9d9d9"></div>
<div class="r" style="left:447px;top:919px;width:1px;height:23px;background:#d9d9d9"></div>
<div class="r" style="left:495px;top:919px;width:1px;height:23px;background:#d9d9d9"></div>
<div class="r" style="left:615px;top:919px;width:1px;height:23px;background:#d9d9d9"></div>
<div class="r" style="left:1131px;top:919px;width:1px;height:23px;background:#d9d9d9"></div>
<div class="r" style="left:1271px;top:919px;width:1px;height:23px;background:#d9d9d9"></div>
<div class="r" style="left:1361px;top:919px;width:1px;height:23px;background:#d9d9d9"></div>
<div class="r" style="left:1451px;top:919px;width:1px;height:23px;background:#d9d9d9"></div>
<div class="r" style="left:1541px;top:919px;width:1px;height:23px;background:#d9d9d9"></div>
<div class="r" style="left:366px;top:941px;width:1233px;height:1px;background:#d9d9d9"></div>
<div class="r" style="left:376px;top:923px;width:13px;height:13px;background:#fff;border:1px solid #6a6a6a;box-sizing:border-box"></div>
<div class="t" style="left:404.00px;top:922.51px;font-size:14.4px;line-height:14.4px;color:#222;font-weight:normal;">001</div>
<div class="t" style="left:451.50px;top:922.68px;font-size:14.2px;line-height:14.2px;color:#222;font-weight:normal;">A02</div>
<div class="t" style="left:501.00px;top:922.51px;font-size:14.4px;line-height:14.4px;color:#222;font-weight:normal;">121151204</div>
<div class="t" style="left:653.00px;top:922.85px;font-size:14px;line-height:14px;color:#222;font-weight:normal;">Sejmutí lesní půdy plochy do 100 m2 tl vrstvy do 250 mm strojně</div>
<div class="t" style="left:1136.00px;top:922.85px;font-size:14px;line-height:14px;color:#222;font-weight:normal;">m2</div>
<div class="t" style="left:158.00px;width:1200px;text-align:right;top:922.60px;font-size:14.3px;line-height:14.3px;color:#222;font-weight:normal;">67,20</div>
<div class="t" style="left:248.00px;width:1200px;text-align:right;top:922.60px;font-size:14.3px;line-height:14.3px;color:#222;font-weight:normal;">43,01</div>
<div class="t" style="left:338.00px;width:1200px;text-align:right;top:922.60px;font-size:14.3px;line-height:14.3px;color:#222;font-weight:normal;">0,00</div>
<div class="t" style="left:399.00px;width:1200px;text-align:right;top:922.60px;font-size:14.3px;line-height:14.3px;color:#222;font-weight:normal;">6</div>
<div class="r" style="left:366px;top:942px;width:33px;height:2px;background:#ffffd0"></div>
<div class="r" style="left:1542px;top:942px;width:57px;height:2px;background:#ffffd0"></div>
<div class="r" style="left:399px;top:942px;width:1px;height:2px;background:#d9d9d9"></div>
<div class="r" style="left:447px;top:942px;width:1px;height:2px;background:#d9d9d9"></div>
<div class="r" style="left:495px;top:942px;width:1px;height:2px;background:#d9d9d9"></div>
<div class="r" style="left:615px;top:942px;width:1px;height:2px;background:#d9d9d9"></div>
<div class="r" style="left:1131px;top:942px;width:1px;height:2px;background:#d9d9d9"></div>
<div class="r" style="left:1271px;top:942px;width:1px;height:2px;background:#d9d9d9"></div>
<div class="r" style="left:1361px;top:942px;width:1px;height:2px;background:#d9d9d9"></div>
<div class="r" style="left:1451px;top:942px;width:1px;height:2px;background:#d9d9d9"></div>
<div class="r" style="left:1541px;top:942px;width:1px;height:2px;background:#d9d9d9"></div>
<div class="r" style="left:1599px;top:252px;width:17px;height:692px;background:#ebebeb"></div>
<div class="r" style="left:1599px;top:269px;width:17px;height:345px;background:#cdcdcd"></div>
<svg class="r" style="left:1603px;top:256px;" width="9" height="8" viewBox="0 0 9 8"><path d="M1 6.5 L4.5 2.5 L8 6.5" fill="none" stroke="#707070" stroke-width="2"/></svg>
<svg class="r" style="left:1603px;top:930px;" width="9" height="8" viewBox="0 0 9 8"><path d="M1 1.5 L4.5 5.5 L8 1.5" fill="none" stroke="#707070" stroke-width="2"/></svg>
<div class="r" style="left:366px;top:944px;width:1250px;height:17px;background:#f0f0f0"></div>
<div class="r" style="left:383px;top:945px;width:530px;height:15px;background:#cdcdcd"></div>
<svg class="r" style="left:370px;top:948px;" width="8" height="10" viewBox="0 0 8 10"><path d="M6 1 L2 5 L6 9" fill="none" stroke="#666" stroke-width="1.5"/></svg>
<svg class="r" style="left:1586px;top:948px;" width="8" height="10" viewBox="0 0 8 10"><path d="M2 1 L6 5 L2 9" fill="none" stroke="#666" stroke-width="1.5"/></svg>
<div class="r" style="left:365px;top:960px;width:1252px;height:1px;background:#a8a8a8"></div>
<div class="r" style="left:1617px;top:173px;width:303px;height:788px;background:#f0f0f0"></div>
<div class="r" style="left:1619px;top:175px;width:296px;height:383px;background:#e6e6e8;border:1px solid #a8a8a8;box-sizing:border-box"></div>
<div class="r" style="left:1620px;top:176px;width:294px;height:35px;background:#f0f0f0"></div>
<div class="r" style="left:1620px;top:211px;width:294px;height:1px;background:#dcdcdc"></div>
<div class="t" style="left:1632.50px;top:186.07px;font-size:13.5px;line-height:13.5px;color:#333;font-weight:normal;">Poznámka k souboru cen</div>
<svg class="r" style="left:1854px;top:189px;" width="12" height="9" viewBox="0 0 12 9"><rect x="0.5" y="0.5" width="10" height="7" fill="none" stroke="#555"/><rect x="0.5" y="0.5" width="10" height="2" fill="#555"/></svg>
<svg class="r" style="left:1874px;top:189px;" width="9" height="10" viewBox="0 0 9 10"><path d="M2.5 0.5 H6.5 V5 H8 V6.5 H5 V9.5 H4 V6.5 H1 V5 H2.5 Z" fill="#555"/></svg>
<svg class="r" style="left:1892px;top:188px;" width="10" height="10" viewBox="0 0 10 10"><path d="M1 1 L9 9 M9 1 L1 9" stroke="#555" stroke-width="1.6"/></svg>
<div class="t" style="left:1622.00px;top:214.07px;font-size:10.9px;line-height:10.9px;color:#444;font-weight:normal;">1. V cenách jsou započteny i náklady na</div>
<div class="t" style="left:1622.00px;top:227.07px;font-size:10.9px;line-height:10.9px;color:#444;font-weight:normal;">a) naložení sejmuté ornice na dopravní prostředek.</div>
<div class="t" style="left:1622.00px;top:240.07px;font-size:10.9px;line-height:10.9px;color:#444;font-weight:normal;">b) vodorovné přemístění na hromady v místě upotřebení</div>
<div class="t" style="left:1622.00px;top:253.07px;font-size:10.9px;line-height:10.9px;color:#444;font-weight:normal;">nebo na dočasné či trvalé skládky na vzdálenost do 50 m a</div>
<div class="t" style="left:1622.00px;top:266.07px;font-size:10.9px;line-height:10.9px;color:#444;font-weight:normal;">se složením.</div>
<div class="t" style="left:1622.00px;top:279.07px;font-size:10.9px;line-height:10.9px;color:#444;font-weight:normal;">2. Ceny lze použít i pro sejmutí podorničí.</div>
<div class="t" style="left:1622.00px;top:292.07px;font-size:10.9px;line-height:10.9px;color:#444;font-weight:normal;">3. V cenách nejsou započteny náklady na odstranění</div>
<div class="t" style="left:1622.00px;top:305.07px;font-size:10.9px;line-height:10.9px;color:#444;font-weight:normal;">nevhodných přímísenin (kamenů, kořenů apod.); tyto práce</div>
<div class="t" style="left:1622.00px;top:318.07px;font-size:10.9px;line-height:10.9px;color:#444;font-weight:normal;">se ocení individuálně.</div>
<div class="r" style="left:1619px;top:562px;width:296px;height:399px;background:#e6e6e8;border:1px solid #a8a8a8;box-sizing:border-box"></div>
<div class="r" style="left:1620px;top:563px;width:294px;height:35px;background:#f0f0f0"></div>
<div class="r" style="left:1620px;top:598px;width:294px;height:1px;background:#dcdcdc"></div>
<div class="t" style="left:1632.50px;top:573.07px;font-size:13.5px;line-height:13.5px;color:#333;font-weight:normal;">Plný popis</div>
<svg class="r" style="left:1854px;top:576px;" width="12" height="9" viewBox="0 0 12 9"><rect x="0.5" y="0.5" width="10" height="7" fill="none" stroke="#555"/><rect x="0.5" y="0.5" width="10" height="2" fill="#555"/></svg>
<svg class="r" style="left:1874px;top:576px;" width="9" height="10" viewBox="0 0 9 10"><path d="M2.5 0.5 H6.5 V5 H8 V6.5 H5 V9.5 H4 V6.5 H1 V5 H2.5 Z" fill="#555"/></svg>
<svg class="r" style="left:1892px;top:575px;" width="10" height="10" viewBox="0 0 10 10"><path d="M1 1 L9 9 M9 1 L1 9" stroke="#555" stroke-width="1.6"/></svg>
<div class="t" style="left:1622.00px;top:601.07px;font-size:10.9px;line-height:10.9px;color:#444;font-weight:normal;">Sejmutí ornice strojně při souvislé ploše do 100 m2, tl.</div>
<div class="t" style="left:1622.00px;top:614.07px;font-size:10.9px;line-height:10.9px;color:#444;font-weight:normal;">vrstvy přes 250 do 300 mm</div>
<div class="r" style="left:1917px;top:171px;width:1px;height:790px;background:#a8a8a8"></div>
<div class="r" style="left:2px;top:961px;width:1915px;height:1px;background:#a8a8a8"></div>
<div class="r" style="left:3px;top:962px;width:1913px;height:19px;background:#fff"></div>
<div class="t" style="left:8.00px;top:967.86px;font-size:10.8px;line-height:10.8px;color:#222;font-weight:normal;">Aktuální položka v rozpočtu</div>
<div class="t" style="left:172.00px;top:967.69px;font-size:11px;line-height:11px;color:#111;font-weight:bold;">K</div>
<div class="t" style="left:188.00px;top:966.42px;font-size:12.5px;line-height:12.5px;color:#1a6fc8;font-weight:bold;text-decoration:underline">273313711</div>
<div class="t" style="left:307.00px;top:966.76px;font-size:12.1px;line-height:12.1px;color:#111;font-weight:bold;">Základové desky z betonu tř. C 20/25</div>
<div class="t" style="left:1455.00px;top:968.11px;font-size:10.5px;line-height:10.5px;color:#222;font-weight:normal;">MJ</div>
<div class="t" style="left:1478.50px;top:967.69px;font-size:11px;line-height:11px;color:#111;font-weight:bold;">m3</div>
<div class="t" style="left:1583.00px;top:968.11px;font-size:10.5px;line-height:10.5px;color:#222;font-weight:normal;">Množství</div>
<div class="t" style="left:1640.00px;top:967.01px;font-size:11.8px;line-height:11.8px;color:#111;font-weight:bold;">18,250</div>
<div class="t" style="left:1753.00px;top:968.11px;font-size:10.5px;line-height:10.5px;color:#222;font-weight:normal;">J. cena</div>
<div class="t" style="left:1797.00px;top:966.67px;font-size:12.2px;line-height:12.2px;color:#111;font-weight:bold;">2 760,00</div>
<svg class="r" style="left:1900px;top:966px;" width="10" height="10" viewBox="0 0 10 10"><path d="M1 1 L9 9 M9 1 L1 9" stroke="#111" stroke-width="1.7"/></svg>
<div class="r" style="left:3px;top:981px;width:1913px;height:5px;background:#bcdcf4"></div>
<div class="r" style="left:3px;top:986px;width:1913px;height:29px;background:#f0f0f0"></div>
<div class="r" style="left:1163px;top:981px;width:99px;height:34px;background:#bcdcf4"></div>
<div class="r" style="left:1543px;top:986px;width:86px;height:29px;background:#c9dddd"></div>
<div class="t" style="left:1170.50px;top:993.03px;font-size:16.5px;line-height:16.5px;color:#222;font-weight:normal;">Ceník prací</div>
<div class="t" style="left:1270.00px;top:993.03px;font-size:16.5px;line-height:16.5px;color:#222;font-weight:normal;">Ceník materiálů</div>
<div class="t" style="left:1401.00px;top:993.03px;font-size:16.5px;line-height:16.5px;color:#222;font-weight:normal;">Materiály online</div>
<div class="t" style="left:1551.00px;top:993.03px;font-size:16.5px;line-height:16.5px;color:#222;font-weight:normal;">Rozpočet</div>
<div class="t" style="left:1637.00px;top:993.03px;font-size:16.5px;line-height:16.5px;color:#222;font-weight:normal;">Kalkulace</div>
<div class="t" style="left:1721.00px;top:993.03px;font-size:16.5px;line-height:16.5px;color:#222;font-weight:normal;">Čerpání</div>
<div class="t" style="left:1796.50px;top:993.03px;font-size:16.5px;line-height:16.5px;color:#222;font-weight:normal;">Výrobní faktura</div>
<div class="r" style="left:2px;top:986px;width:1px;height:29px;background:#a8a8a8"></div>
<div class="r" style="left:1916px;top:981px;width:1px;height:34px;background:#a8a8a8"></div>
<div class="r" style="left:555px;top:408px;width:811px;height:449px;box-shadow:0 0 14px 4px rgba(0,0,0,0.28)"></div>
<div class="r" style="left:555px;top:408px;width:811px;height:31px;background:#767676"></div>
<div class="r" style="left:555px;top:439px;width:811px;height:418px;background:#f0f0f0;border:1px solid #8a8a8a;border-top:none;box-sizing:border-box"></div>
<div class="r" style="left:564px;top:415px;width:16px;height:16px;background:#fff"></div>
<div class="r" style="left:565px;top:416px;width:14px;height:14px;background:#1a237e"></div>
<div class="t" style="left:565.00px;top:418.27px;font-size:11.5px;line-height:11.5px;color:#fff;font-weight:bold;letter-spacing:-1.5px">Kr</div>
<div class="t" style="left:585.50px;top:417.53px;font-size:11.9px;line-height:11.9px;color:#fff;font-weight:normal;">Zápis konstrukce do rozpočtu (změněno)</div>
<svg class="r" style="left:1344px;top:417px;" width="12" height="12" viewBox="0 0 12 12"><path d="M1 1 L11 11 M11 1 L1 11" stroke="#fff" stroke-width="1.2"/></svg>
<div class="t" style="left:566.00px;top:452.07px;font-size:11.5px;line-height:11.5px;color:#333;font-weight:normal;">Kód položky</div>
<div class="r" style="left:566px;top:465px;width:134px;height:20px;background:#ffffd0;border:1px solid #a0a0a0;box-sizing:border-box"></div>
<div class="t" style="left:570.50px;top:470.07px;font-size:11.5px;line-height:11.5px;color:#222;font-weight:normal;">121151105</div>
<div class="t" style="left:707.00px;top:452.07px;font-size:11.5px;line-height:11.5px;color:#333;font-weight:normal;">Zkrácený popis</div>
<div class="r" style="left:707px;top:465px;width:648px;height:20px;background:#fff;border:1px solid #a0a0a0;box-sizing:border-box"></div>
<div class="t" style="left:711.00px;top:470.07px;font-size:11.5px;line-height:11.5px;color:#222;font-weight:normal;">Sejmutí ornice plochy do 100 m2 tl vrstvy do 300 mm strojně</div>
<div class="t" style="left:565.00px;top:491.49px;font-size:11px;line-height:11px;color:#333;font-weight:normal;">Množství (z výkazu výměr)</div>
<div class="r" style="left:565px;top:504px;width:347px;height:28px;background:#fff;border:1px solid #a0a0a0;box-sizing:border-box"></div>
<div class="t" style="left:569.00px;top:510.58px;font-size:15.5px;line-height:15.5px;color:#2020e8;font-weight:normal;">8,500</div>
<svg class="r" style="left:921px;top:509px;" width="19" height="19" viewBox="0 0 19 19"><path d="M0.5 0.5 H8.5 L12.5 4.5 V16.5 H0.5 Z" fill="#f4f4f6" stroke="#6b7384"/><path d="M3 9 L6.5 5 L10 9 V15 H3 Z" fill="#a27ac8"/><path d="M2.5 14.5 L14.5 2.5 L17.5 5.5 L5.5 17.5 Z" fill="#f2c565" stroke="#b07a20" stroke-width="0.7"/><path d="M6 13 L7 14 M8 11 L9 12 M10 9 L11 10 M12 7 L13 8" stroke="#a06a10" stroke-width="0.8"/></svg>
<div class="t" style="left:948.00px;top:491.07px;font-size:11.5px;line-height:11.5px;color:#333;font-weight:normal;">MJ</div>
<div class="r" style="left:947px;top:504px;width:79px;height:28px;background:#fff;border:1px solid #a0a0a0;box-sizing:border-box"></div>
<div class="t" style="left:951.50px;top:510.16px;font-size:16px;line-height:16px;color:#222;font-weight:normal;">m2</div>
<div class="t" style="left:1032.50px;top:491.07px;font-size:11.5px;line-height:11.5px;color:#333;font-weight:normal;">Koeficient množství</div>
<div class="r" style="left:1032px;top:504px;width:101px;height:28px;background:#e3e3e3;border:1px solid #a0a0a0;box-sizing:border-box"></div>
<div class="t" style="left:-71.00px;width:1200px;text-align:right;top:510.58px;font-size:15.5px;line-height:15.5px;color:#555;font-weight:normal;">1,00000</div>
<div class="t" style="left:1139.50px;top:491.07px;font-size:11.5px;line-height:11.5px;color:#1a6fc8;font-weight:normal;text-decoration:underline">Orientační cena</div>
<div class="r" style="left:1139px;top:504px;width:104px;height:28px;background:#fff;border:1px solid #a0a0a0;box-sizing:border-box"></div>
<div class="t" style="left:39.00px;width:1200px;text-align:right;top:510.58px;font-size:15.5px;line-height:15.5px;color:#222;font-weight:normal;">65,40</div>
<div class="t" style="left:1249.50px;top:491.32px;font-size:11.2px;line-height:11.2px;color:#333;font-weight:normal;">Celková cena</div>
<div class="t" style="left:1322.00px;top:493.03px;font-size:10.6px;line-height:10.6px;color:#333;font-weight:normal;">(CZK)</div>
<div class="r" style="left:1249px;top:504px;width:106px;height:28px;background:#fff;border:1px solid #a0a0a0;box-sizing:border-box"></div>
<div class="t" style="left:151.00px;width:1200px;text-align:right;top:510.58px;font-size:15.5px;line-height:15.5px;color:#222;font-weight:normal;">555,90</div>
<div class="t" style="left:565.00px;top:535.87px;font-size:11.5px;line-height:11.5px;color:#1a6fc8;font-weight:normal;text-decoration:underline">Podmínky online</div>
<div class="r" style="left:562px;top:557px;width:706px;height:231px;background:#fff;border:1px solid #a0a0a0;box-sizing:border-box"></div>
<div class="r" style="left:563px;top:558px;width:35px;height:19px;background:#f0f0f0"></div>
<div class="r" style="left:598px;top:558px;width:375px;height:19px;background:#a9a9a9"></div>
<div class="r" style="left:974px;top:558px;width:99px;height:19px;background:#f0f0f0"></div>
<div class="r" style="left:1074px;top:558px;width:99px;height:19px;background:#f0f0f0"></div>
<div class="r" style="left:1174px;top:558px;width:69px;height:19px;background:#f0f0f0"></div>
<div class="r" style="left:1250px;top:558px;width:17px;height:19px;background:#f0f0f0"></div>
<div class="r" style="left:563px;top:577px;width:704px;height:1px;background:#a0a0a0"></div>
<div class="r" style="left:597px;top:558px;width:1px;height:19px;background:#b0b0b0"></div>
<div class="r" style="left:973px;top:558px;width:1px;height:19px;background:#b0b0b0"></div>
<div class="r" style="left:1073px;top:558px;width:1px;height:19px;background:#b0b0b0"></div>
<div class="r" style="left:1173px;top:558px;width:1px;height:19px;background:#b0b0b0"></div>
<div class="r" style="left:1243px;top:558px;width:1px;height:19px;background:#b0b0b0"></div>
<div class="t" style="left:-20.00px;width:1200px;text-align:center;top:562.69px;font-size:11px;line-height:11px;color:#444;font-weight:normal;">O</div>
<div class="t" style="left:185.50px;width:1200px;text-align:center;top:562.69px;font-size:11px;line-height:11px;color:#333;font-weight:normal;">Výkaz</div>
<div class="t" style="left:423.50px;width:1200px;text-align:center;top:562.27px;font-size:11.5px;line-height:11.5px;color:#444;font-weight:normal;">Výměra</div>
<div class="t" style="left:523.50px;width:1200px;text-align:center;top:562.27px;font-size:11.5px;line-height:11.5px;color:#444;font-weight:normal;">Figura</div>
<div class="t" style="left:608.50px;width:1200px;text-align:center;top:562.27px;font-size:11.5px;line-height:11.5px;color:#444;font-weight:normal;">Tisknout</div>
<div class="r" style="left:563px;top:578px;width:34px;height:19px;background:#ffffd0"></div>
<div class="r" style="left:598px;top:578px;width:375px;height:19px;background:#ffffd0"></div>
<div class="r" style="left:974px;top:578px;width:99px;height:19px;background:#fff"></div>
<div class="r" style="left:1074px;top:578px;width:99px;height:19px;background:#ffffd0"></div>
<div class="r" style="left:1174px;top:578px;width:69px;height:19px;background:#ffffd0"></div>
<div class="r" style="left:563px;top:597px;width:681px;height:1px;background:#c8c8c8"></div>
<div class="r" style="left:597px;top:578px;width:1px;height:20px;background:#c8c8c8"></div>
<div class="r" style="left:973px;top:578px;width:1px;height:20px;background:#c8c8c8"></div>
<div class="r" style="left:1073px;top:578px;width:1px;height:20px;background:#c8c8c8"></div>
<div class="r" style="left:1173px;top:578px;width:1px;height:20px;background:#c8c8c8"></div>
<div class="r" style="left:1243px;top:578px;width:1px;height:20px;background:#c8c8c8"></div>
<div class="r" style="left:563px;top:578px;width:704px;height:19px;overflow:hidden">
<div class="r" style="left:10px;top:4px;width:12px;height:12px;background:#fff;border:1.5px solid #111;box-sizing:border-box"></div>
<svg class="r" style="left:638px;top:3px" width="13" height="13"><rect x="0.75" y="0.75" width="11.5" height="11.5" fill="#fff" stroke="#111" stroke-width="1.5"/><path d="M3 6.5 L5.5 9 L10 3.5" fill="none" stroke="#111" stroke-width="1.8"/></svg>
</div>
<div class="t" style="left:600.00px;top:580.90px;font-size:13.7px;line-height:13.7px;color:#111;font-weight:normal;"><span style="color:#8b108b">"objekt RD</span></div>
<div class="r" style="left:563px;top:598px;width:34px;height:19px;background:#ffffd0"></div>
<div class="r" style="left:598px;top:598px;width:375px;height:19px;background:#ffffd0"></div>
<div class="r" style="left:974px;top:598px;width:99px;height:19px;background:#fff"></div>
<div class="r" style="left:1074px;top:598px;width:99px;height:19px;background:#ffffd0"></div>
<div class="r" style="left:1174px;top:598px;width:69px;height:19px;background:#ffffd0"></div>
<div class="r" style="left:563px;top:617px;width:681px;height:1px;background:#c8c8c8"></div>
<div class="r" style="left:597px;top:598px;width:1px;height:20px;background:#c8c8c8"></div>
<div class="r" style="left:973px;top:598px;width:1px;height:20px;background:#c8c8c8"></div>
<div class="r" style="left:1073px;top:598px;width:1px;height:20px;background:#c8c8c8"></div>
<div class="r" style="left:1173px;top:598px;width:1px;height:20px;background:#c8c8c8"></div>
<div class="r" style="left:1243px;top:598px;width:1px;height:20px;background:#c8c8c8"></div>
<div class="r" style="left:563px;top:598px;width:704px;height:19px;overflow:hidden">
<div class="r" style="left:10px;top:4px;width:12px;height:12px;background:#fff;border:1.5px solid #111;box-sizing:border-box"></div>
<svg class="r" style="left:638px;top:3px" width="13" height="13"><rect x="0.75" y="0.75" width="11.5" height="11.5" fill="#fff" stroke="#111" stroke-width="1.5"/><path d="M3 6.5 L5.5 9 L10 3.5" fill="none" stroke="#111" stroke-width="1.8"/></svg>
</div>
<div class="t" style="left:600.00px;top:600.90px;font-size:13.7px;line-height:13.7px;color:#111;font-weight:normal;">12*10</div>
<div class="t" style="left:-129.50px;width:1200px;text-align:right;top:601.33px;font-size:13.2px;line-height:13.2px;color:#111;font-weight:normal;">120,000</div>
<div class="r" style="left:563px;top:618px;width:34px;height:19px;background:#ffffd0"></div>
<div class="r" style="left:598px;top:618px;width:375px;height:19px;background:#ffffd0"></div>
<div class="r" style="left:974px;top:618px;width:99px;height:19px;background:#fff"></div>
<div class="r" style="left:1074px;top:618px;width:99px;height:19px;background:#ffffd0"></div>
<div class="r" style="left:1174px;top:618px;width:69px;height:19px;background:#ffffd0"></div>
<div class="r" style="left:563px;top:637px;width:681px;height:1px;background:#c8c8c8"></div>
<div class="r" style="left:597px;top:618px;width:1px;height:20px;background:#c8c8c8"></div>
<div class="r" style="left:973px;top:618px;width:1px;height:20px;background:#c8c8c8"></div>
<div class="r" style="left:1073px;top:618px;width:1px;height:20px;background:#c8c8c8"></div>
<div class="r" style="left:1173px;top:618px;width:1px;height:20px;background:#c8c8c8"></div>
<div class="r" style="left:1243px;top:618px;width:1px;height:20px;background:#c8c8c8"></div>
<div class="r" style="left:563px;top:618px;width:704px;height:19px;overflow:hidden">
<div class="r" style="left:10px;top:4px;width:12px;height:12px;background:#fff;border:1.5px solid #111;box-sizing:border-box"></div>
<svg class="r" style="left:638px;top:3px" width="13" height="13"><rect x="0.75" y="0.75" width="11.5" height="11.5" fill="#fff" stroke="#111" stroke-width="1.5"/><path d="M3 6.5 L5.5 9 L10 3.5" fill="none" stroke="#111" stroke-width="1.8"/></svg>
</div>
<div class="t" style="left:600.00px;top:620.90px;font-size:13.7px;line-height:13.7px;color:#111;font-weight:normal;"><span style="color:#8b108b">"parkovaci stani</span></div>
<div class="r" style="left:563px;top:638px;width:34px;height:19px;background:#ffffd0"></div>
<div class="r" style="left:598px;top:638px;width:375px;height:19px;background:#ffffd0"></div>
<div class="r" style="left:974px;top:638px;width:99px;height:19px;background:#fff"></div>
<div class="r" style="left:1074px;top:638px;width:99px;height:19px;background:#ffffd0"></div>
<div class="r" style="left:1174px;top:638px;width:69px;height:19px;background:#ffffd0"></div>
<div class="r" style="left:563px;top:657px;width:681px;height:1px;background:#c8c8c8"></div>
<div class="r" style="left:597px;top:638px;width:1px;height:20px;background:#c8c8c8"></div>
<div class="r" style="left:973px;top:638px;width:1px;height:20px;background:#c8c8c8"></div>
<div class="r" style="left:1073px;top:638px;width:1px;height:20px;background:#c8c8c8"></div>
<div class="r" style="left:1173px;top:638px;width:1px;height:20px;background:#c8c8c8"></div>
<div class="r" style="left:1243px;top:638px;width:1px;height:20px;background:#c8c8c8"></div>
<div class="r" style="left:563px;top:638px;width:704px;height:19px;overflow:hidden">
<div class="r" style="left:10px;top:4px;width:12px;height:12px;background:#fff;border:1.5px solid #111;box-sizing:border-box"></div>
<svg class="r" style="left:638px;top:3px" width="13" height="13"><rect x="0.75" y="0.75" width="11.5" height="11.5" fill="#fff" stroke="#111" stroke-width="1.5"/><path d="M3 6.5 L5.5 9 L10 3.5" fill="none" stroke="#111" stroke-width="1.8"/></svg>
</div>
<div class="t" style="left:600.00px;top:640.90px;font-size:13.7px;line-height:13.7px;color:#111;font-weight:normal;">5*4,5</div>
<div class="t" style="left:-129.50px;width:1200px;text-align:right;top:641.33px;font-size:13.2px;line-height:13.2px;color:#111;font-weight:normal;">22,500</div>
<div class="r" style="left:563px;top:658px;width:34px;height:19px;background:#ffffd0"></div>
<div class="r" style="left:598px;top:658px;width:375px;height:19px;background:#ffffd0"></div>
<div class="r" style="left:974px;top:658px;width:99px;height:19px;background:#fff"></div>
<div class="r" style="left:1074px;top:658px;width:99px;height:19px;background:#ffffd0"></div>
<div class="r" style="left:1174px;top:658px;width:69px;height:19px;background:#ffffd0"></div>
<div class="r" style="left:563px;top:677px;width:681px;height:1px;background:#c8c8c8"></div>
<div class="r" style="left:597px;top:658px;width:1px;height:20px;background:#c8c8c8"></div>
<div class="r" style="left:973px;top:658px;width:1px;height:20px;background:#c8c8c8"></div>
<div class="r" style="left:1073px;top:658px;width:1px;height:20px;background:#c8c8c8"></div>
<div class="r" style="left:1173px;top:658px;width:1px;height:20px;background:#c8c8c8"></div>
<div class="r" style="left:1243px;top:658px;width:1px;height:20px;background:#c8c8c8"></div>
<div class="r" style="left:563px;top:658px;width:704px;height:19px;overflow:hidden">
<div class="r" style="left:10px;top:4px;width:12px;height:12px;background:#fff;border:1.5px solid #111;box-sizing:border-box"></div>
<svg class="r" style="left:638px;top:3px" width="13" height="13"><rect x="0.75" y="0.75" width="11.5" height="11.5" fill="#fff" stroke="#111" stroke-width="1.5"/><path d="M3 6.5 L5.5 9 L10 3.5" fill="none" stroke="#111" stroke-width="1.8"/></svg>
</div>
<div class="t" style="left:600.00px;top:660.90px;font-size:13.7px;line-height:13.7px;color:#111;font-weight:normal;"><span style="color:#8b108b">"komunikace</span></div>
<div class="r" style="left:563px;top:678px;width:34px;height:19px;background:#ffffd0"></div>
<div class="r" style="left:598px;top:678px;width:375px;height:19px;background:#ffffd0"></div>
<div class="r" style="left:974px;top:678px;width:99px;height:19px;background:#fff"></div>
<div class="r" style="left:1074px;top:678px;width:99px;height:19px;background:#ffffd0"></div>
<div class="r" style="left:1174px;top:678px;width:69px;height:19px;background:#ffffd0"></div>
<div class="r" style="left:563px;top:697px;width:681px;height:1px;background:#c8c8c8"></div>
<div class="r" style="left:597px;top:678px;width:1px;height:20px;background:#c8c8c8"></div>
<div class="r" style="left:973px;top:678px;width:1px;height:20px;background:#c8c8c8"></div>
<div class="r" style="left:1073px;top:678px;width:1px;height:20px;background:#c8c8c8"></div>
<div class="r" style="left:1173px;top:678px;width:1px;height:20px;background:#c8c8c8"></div>
<div class="r" style="left:1243px;top:678px;width:1px;height:20px;background:#c8c8c8"></div>
<div class="r" style="left:563px;top:678px;width:704px;height:19px;overflow:hidden">
<div class="r" style="left:10px;top:4px;width:12px;height:12px;background:#fff;border:1.5px solid #111;box-sizing:border-box"></div>
<svg class="r" style="left:638px;top:3px" width="13" height="13"><rect x="0.75" y="0.75" width="11.5" height="11.5" fill="#fff" stroke="#111" stroke-width="1.5"/><path d="M3 6.5 L5.5 9 L10 3.5" fill="none" stroke="#111" stroke-width="1.8"/></svg>
</div>
<div class="t" style="left:600.00px;top:680.90px;font-size:13.7px;line-height:13.7px;color:#111;font-weight:normal;">12*1,0*2 <span style="color:#8b108b">"chodnik kolem RD</span></div>
<div class="t" style="left:-129.50px;width:1200px;text-align:right;top:681.33px;font-size:13.2px;line-height:13.2px;color:#111;font-weight:normal;">24,000</div>
<div class="r" style="left:563px;top:698px;width:34px;height:19px;background:#ffffd0"></div>
<div class="r" style="left:598px;top:698px;width:375px;height:19px;background:#ffffd0"></div>
<div class="r" style="left:974px;top:698px;width:99px;height:19px;background:#c4f6bc"></div>
<div class="r" style="left:1074px;top:698px;width:99px;height:19px;background:#ffffd0"></div>
<div class="r" style="left:1174px;top:698px;width:69px;height:19px;background:#ffffd0"></div>
<div class="r" style="left:563px;top:717px;width:681px;height:1px;background:#c8c8c8"></div>
<div class="r" style="left:597px;top:698px;width:1px;height:20px;background:#c8c8c8"></div>
<div class="r" style="left:973px;top:698px;width:1px;height:20px;background:#c8c8c8"></div>
<div class="r" style="left:1073px;top:698px;width:1px;height:20px;background:#c8c8c8"></div>
<div class="r" style="left:1173px;top:698px;width:1px;height:20px;background:#c8c8c8"></div>
<div class="r" style="left:1243px;top:698px;width:1px;height:20px;background:#c8c8c8"></div>
<div class="r" style="left:563px;top:698px;width:704px;height:19px;overflow:hidden">
<div class="r" style="left:10px;top:4px;width:12px;height:12px;background:#fff;border:1.5px solid #111;box-sizing:border-box"></div>
<svg class="r" style="left:638px;top:3px" width="13" height="13"><rect x="0.75" y="0.75" width="11.5" height="11.5" fill="#fff" stroke="#111" stroke-width="1.5"/><path d="M3 6.5 L5.5 9 L10 3.5" fill="none" stroke="#111" stroke-width="1.8"/></svg>
</div>
<div class="t" style="left:600.00px;top:700.90px;font-size:13.7px;line-height:13.7px;color:#111;font-weight:normal;">8,5*1,0 <span style="color:#8b108b">"spojovaci</span></div>
<div class="t" style="left:-129.50px;width:1200px;text-align:right;top:701.33px;font-size:13.2px;line-height:13.2px;color:#111;font-weight:normal;">8,500</div>
<div class="r" style="left:563px;top:718px;width:34px;height:19px;background:#ffffd0"></div>
<div class="r" style="left:598px;top:718px;width:375px;height:19px;background:#ffffd0"></div>
<div class="r" style="left:974px;top:718px;width:99px;height:19px;background:#fff"></div>
<div class="r" style="left:1074px;top:718px;width:99px;height:19px;background:#ffffd0"></div>
<div class="r" style="left:1174px;top:718px;width:69px;height:19px;background:#ffffd0"></div>
<div class="r" style="left:563px;top:737px;width:681px;height:1px;background:#c8c8c8"></div>
<div class="r" style="left:597px;top:718px;width:1px;height:20px;background:#c8c8c8"></div>
<div class="r" style="left:973px;top:718px;width:1px;height:20px;background:#c8c8c8"></div>
<div class="r" style="left:1073px;top:718px;width:1px;height:20px;background:#c8c8c8"></div>
<div class="r" style="left:1173px;top:718px;width:1px;height:20px;background:#c8c8c8"></div>
<div class="r" style="left:1243px;top:718px;width:1px;height:20px;background:#c8c8c8"></div>
<div class="r" style="left:563px;top:718px;width:704px;height:19px;overflow:hidden">
<div class="r" style="left:10px;top:4px;width:12px;height:12px;background:#fff;border:1.5px solid #111;box-sizing:border-box"></div>
<svg class="r" style="left:638px;top:3px" width="13" height="13"><rect x="0.75" y="0.75" width="11.5" height="11.5" fill="#fff" stroke="#111" stroke-width="1.5"/><path d="M3 6.5 L5.5 9 L10 3.5" fill="none" stroke="#111" stroke-width="1.8"/></svg>
</div>
<div class="t" style="left:600.00px;top:720.90px;font-size:13.7px;line-height:13.7px;color:#111;font-weight:normal;">5,5*1,0</div>
<div class="r" style="left:563px;top:738px;width:34px;height:19px;background:#ffffd0"></div>
<div class="r" style="left:598px;top:738px;width:375px;height:19px;background:#ffffd0"></div>
<div class="r" style="left:974px;top:738px;width:99px;height:19px;background:#fff"></div>
<div class="r" style="left:1074px;top:738px;width:99px;height:19px;background:#ffffd0"></div>
<div class="r" style="left:1174px;top:738px;width:69px;height:19px;background:#ffffd0"></div>
<div class="r" style="left:563px;top:757px;width:681px;height:1px;background:#c8c8c8"></div>
<div class="r" style="left:597px;top:738px;width:1px;height:20px;background:#c8c8c8"></div>
<div class="r" style="left:973px;top:738px;width:1px;height:20px;background:#c8c8c8"></div>
<div class="r" style="left:1073px;top:738px;width:1px;height:20px;background:#c8c8c8"></div>
<div class="r" style="left:1173px;top:738px;width:1px;height:20px;background:#c8c8c8"></div>
<div class="r" style="left:1243px;top:738px;width:1px;height:20px;background:#c8c8c8"></div>
<div class="r" style="left:563px;top:738px;width:704px;height:19px;overflow:hidden">
<div class="r" style="left:10px;top:4px;width:12px;height:12px;background:#fff;border:1.5px solid #111;box-sizing:border-box"></div>
<svg class="r" style="left:638px;top:3px" width="13" height="13"><rect x="0.75" y="0.75" width="11.5" height="11.5" fill="#fff" stroke="#111" stroke-width="1.5"/><path d="M3 6.5 L5.5 9 L10 3.5" fill="none" stroke="#111" stroke-width="1.8"/></svg>
</div>
<div class="r" style="left:563px;top:758px;width:34px;height:19px;background:#ffffd0"></div>
<div class="r" style="left:598px;top:758px;width:375px;height:19px;background:#ffffd0"></div>
<div class="r" style="left:974px;top:758px;width:99px;height:19px;background:#fff"></div>
<div class="r" style="left:1074px;top:758px;width:99px;height:19px;background:#ffffd0"></div>
<div class="r" style="left:1174px;top:758px;width:69px;height:19px;background:#ffffd0"></div>
<div class="r" style="left:563px;top:777px;width:681px;height:1px;background:#c8c8c8"></div>
<div class="r" style="left:597px;top:758px;width:1px;height:20px;background:#c8c8c8"></div>
<div class="r" style="left:973px;top:758px;width:1px;height:20px;background:#c8c8c8"></div>
<div class="r" style="left:1073px;top:758px;width:1px;height:20px;background:#c8c8c8"></div>
<div class="r" style="left:1173px;top:758px;width:1px;height:20px;background:#c8c8c8"></div>
<div class="r" style="left:1243px;top:758px;width:1px;height:20px;background:#c8c8c8"></div>
<div class="r" style="left:563px;top:758px;width:704px;height:19px;overflow:hidden">
<div class="r" style="left:10px;top:4px;width:12px;height:12px;background:#fff;border:1.5px solid #111;box-sizing:border-box"></div>
<svg class="r" style="left:638px;top:3px" width="13" height="13"><rect x="0.75" y="0.75" width="11.5" height="11.5" fill="#fff" stroke="#111" stroke-width="1.5"/><path d="M3 6.5 L5.5 9 L10 3.5" fill="none" stroke="#111" stroke-width="1.8"/></svg>
</div>
<div class="r" style="left:563px;top:778px;width:34px;height:9px;background:#ffffd0"></div>
<div class="r" style="left:598px;top:778px;width:375px;height:9px;background:#ffffd0"></div>
<div class="r" style="left:974px;top:778px;width:99px;height:9px;background:#fff"></div>
<div class="r" style="left:1074px;top:778px;width:99px;height:9px;background:#ffffd0"></div>
<div class="r" style="left:1174px;top:778px;width:69px;height:9px;background:#ffffd0"></div>
<div class="r" style="left:597px;top:778px;width:1px;height:9px;background:#c8c8c8"></div>
<div class="r" style="left:973px;top:778px;width:1px;height:9px;background:#c8c8c8"></div>
<div class="r" style="left:1073px;top:778px;width:1px;height:9px;background:#c8c8c8"></div>
<div class="r" style="left:1173px;top:778px;width:1px;height:9px;background:#c8c8c8"></div>
<div class="r" style="left:1243px;top:778px;width:1px;height:9px;background:#c8c8c8"></div>
<div class="r" style="left:563px;top:778px;width:704px;height:9px;overflow:hidden">
<div class="r" style="left:10px;top:4px;width:12px;height:12px;background:#fff;border:1.5px solid #111;box-sizing:border-box"></div>
<svg class="r" style="left:638px;top:3px" width="13" height="13"><rect x="0.75" y="0.75" width="11.5" height="11.5" fill="#fff" stroke="#111" stroke-width="1.5"/><path d="M3 6.5 L5.5 9 L10 3.5" fill="none" stroke="#111" stroke-width="1.8"/></svg>
</div>
<div class="r" style="left:596px;top:716px;width:379px;height:23px;border:2px solid #1c3f8a;box-sizing:border-box"></div>
<div class="r" style="left:1244px;top:578px;width:6px;height:209px;background:#fff"></div>
<div class="r" style="left:1250px;top:578px;width:17px;height:209px;background:#f0f0f0"></div>
<div class="r" style="left:1250px;top:596px;width:17px;height:133px;background:#cdcdcd"></div>
<svg class="r" style="left:1254px;top:582px;" width="10" height="7" viewBox="0 0 10 7"><path d="M1 6 L5 2 L9 6" fill="none" stroke="#666" stroke-width="1.4"/></svg>
<svg class="r" style="left:1254px;top:775px;" width="10" height="7" viewBox="0 0 10 7"><path d="M1 1 L5 5 L9 1" fill="none" stroke="#666" stroke-width="1.4"/></svg>
<div class="r" style="left:1266px;top:557px;width:1px;height:231px;background:#a0a0a0"></div>
<svg class="r" style="left:1282px;top:560px;" width="18" height="17" viewBox="0 0 18 17"><path d="M6.5 0.5 H12 L15.5 4 V15.5 H6.5 Z" fill="#f4f4f6" stroke="#6b7384"/><path d="M0.5 7 H6 V4 L11 9 L6 14 V11 H0.5 Z" fill="#3d8fe0"/></svg>
<svg class="r" style="left:1311px;top:560px;" width="18" height="17" viewBox="0 0 18 17"><path d="M0.5 0.5 H6 L9 3.5 V11.5 H0.5 Z" fill="#f4f4f6" stroke="#6b7384"/><path d="M6.5 4.5 H12 L15.5 8 V15.5 H6.5 Z" fill="#f4f4f6" stroke="#6b7384"/></svg>
<svg class="r" style="left:1342px;top:560px;" width="17" height="17" viewBox="0 0 17 17"><path d="M0.5 0.5 H7 L10.5 4 V15.5 H0.5 Z" fill="#f4f4f6" stroke="#6b7384"/><path d="M5 7 H10 V4.5 L15 9 L10 13.5 V11 H5 Z" fill="#e82020"/></svg>
<svg class="r" style="left:1282px;top:583px;" width="18" height="16" viewBox="0 0 18 16"><path d="M4 7 Q10 2 14 7 Q16 11 13 15" fill="none" stroke="#2a7ad0" stroke-width="2.6"/><path d="M0.5 3 L0.5 10 L7 10 Z" fill="#2a7ad0"/></svg>
<svg class="r" style="left:1311px;top:583px;" width="18" height="16" viewBox="0 0 18 16"><path d="M14 7 Q8 2 4 7 Q2 11 5 15" fill="none" stroke="#999" stroke-width="2.6"/><path d="M17.5 3 L17.5 10 L11 10 Z" fill="#999"/></svg>
<svg class="r" style="left:1343px;top:583px;" width="12" height="16" viewBox="0 0 12 16"><rect x="0.5" y="0.5" width="10" height="14" fill="#f4f4f6" stroke="#6b7384"/><g fill="#777"><rect x="2.5" y="3" width="6" height="1"/><rect x="2.5" y="5" width="6" height="1"/><rect x="2.5" y="7" width="6" height="1"/><rect x="2.5" y="9" width="6" height="1"/><rect x="2.5" y="11" width="6" height="1"/></g></svg>
<div class="r" style="left:1278px;top:608px;width:81px;height:21px;background:#efefef;border:1px solid #a8a8a8;box-sizing:border-box"></div>
<div class="r" style="left:1278px;top:635px;width:81px;height:21px;background:#efefef;border:1px solid #a8a8a8;box-sizing:border-box"></div>
<div class="r" style="left:1278px;top:662px;width:81px;height:21px;background:#efefef;border:1px solid #a8a8a8;box-sizing:border-box"></div>
<div class="r" style="left:1278px;top:689px;width:81px;height:21px;background:#efefef;border:1px solid #a8a8a8;box-sizing:border-box"></div>
<div class="r" style="left:1278px;top:716px;width:81px;height:21px;background:#efefef;border:1px solid #a8a8a8;box-sizing:border-box"></div>
<div class="t" style="left:718.50px;width:1200px;text-align:center;top:614.27px;font-size:11.5px;line-height:11.5px;color:#ee1010;font-weight:bold;">Součet</div>
<div class="t" style="left:718.50px;width:1200px;text-align:center;top:641.27px;font-size:11.5px;line-height:11.5px;color:#1010e0;font-weight:bold;">Mezisoučet</div>
<div class="t" style="left:718.50px;width:1200px;text-align:center;top:668.27px;font-size:11.5px;line-height:11.5px;color:#333;font-weight:normal;">Jiný výkaz</div>
<div class="t" style="left:712.50px;width:1200px;text-align:center;top:694.43px;font-size:11.3px;line-height:11.3px;color:#333;font-weight:normal;">Jiné funkce</div>
<svg class="r" style="left:1348px;top:698px;" width="8" height="5" viewBox="0 0 8 5"><path d="M0 0 H7 L3.5 3.5 Z" fill="#555"/></svg>
<svg class="r" style="left:1280px;top:717px;" width="18" height="18" viewBox="0 0 18 18"><path d="M5.5 1.5 H14 L17.5 5 V17.5 H5.5 Z" fill="#f4f4f6" stroke="#5b6070"/><path d="M7 13.5 H16 M12.5 7 V16" stroke="#666" stroke-width="1"/><rect x="1" y="3" width="9" height="9" fill="#c02aa0"/><path d="M2.8 10.5 L5.5 4.5 L8.2 10.5" fill="none" stroke="#fff" stroke-width="1.6"/></svg>
<div class="t" style="left:727.00px;width:1200px;text-align:center;top:721.69px;font-size:11px;line-height:11px;color:#333;font-weight:normal;">AREA</div>
<div class="t" style="left:566.00px;top:800.65px;font-size:11.4px;line-height:11.4px;color:#333;font-weight:normal;">Zápis do <b>ROZPOČTU</b> <span style="color:#1a6fc8;text-decoration:underline">podle kódu položky</span> do dílu: Zemní práce</div>
<div class="r" style="left:565px;top:826px;width:134px;height:21px;background:#efefef;border:1px solid #a8a8a8;box-sizing:border-box"></div>
<div class="t" style="left:32.00px;width:1200px;text-align:center;top:831.77px;font-size:11.5px;line-height:11.5px;color:#333;font-weight:normal;">Zobrazit ostatní údaje</div>
<div class="r" style="left:1220px;top:827px;width:63px;height:21px;background:#efefef;border:1px solid #333;box-sizing:border-box"></div>
<div class="t" style="left:651.50px;width:1200px;text-align:center;top:832.27px;font-size:11.5px;line-height:11.5px;color:#333;font-weight:normal;">OK</div>
<div class="r" style="left:1291px;top:827px;width:63px;height:21px;background:#efefef;border:1px solid #a8a8a8;box-sizing:border-box"></div>
<div class="t" style="left:722.50px;width:1200px;text-align:center;top:832.27px;font-size:11.5px;line-height:11.5px;color:#333;font-weight:normal;">Storno</div>
</body></html>
